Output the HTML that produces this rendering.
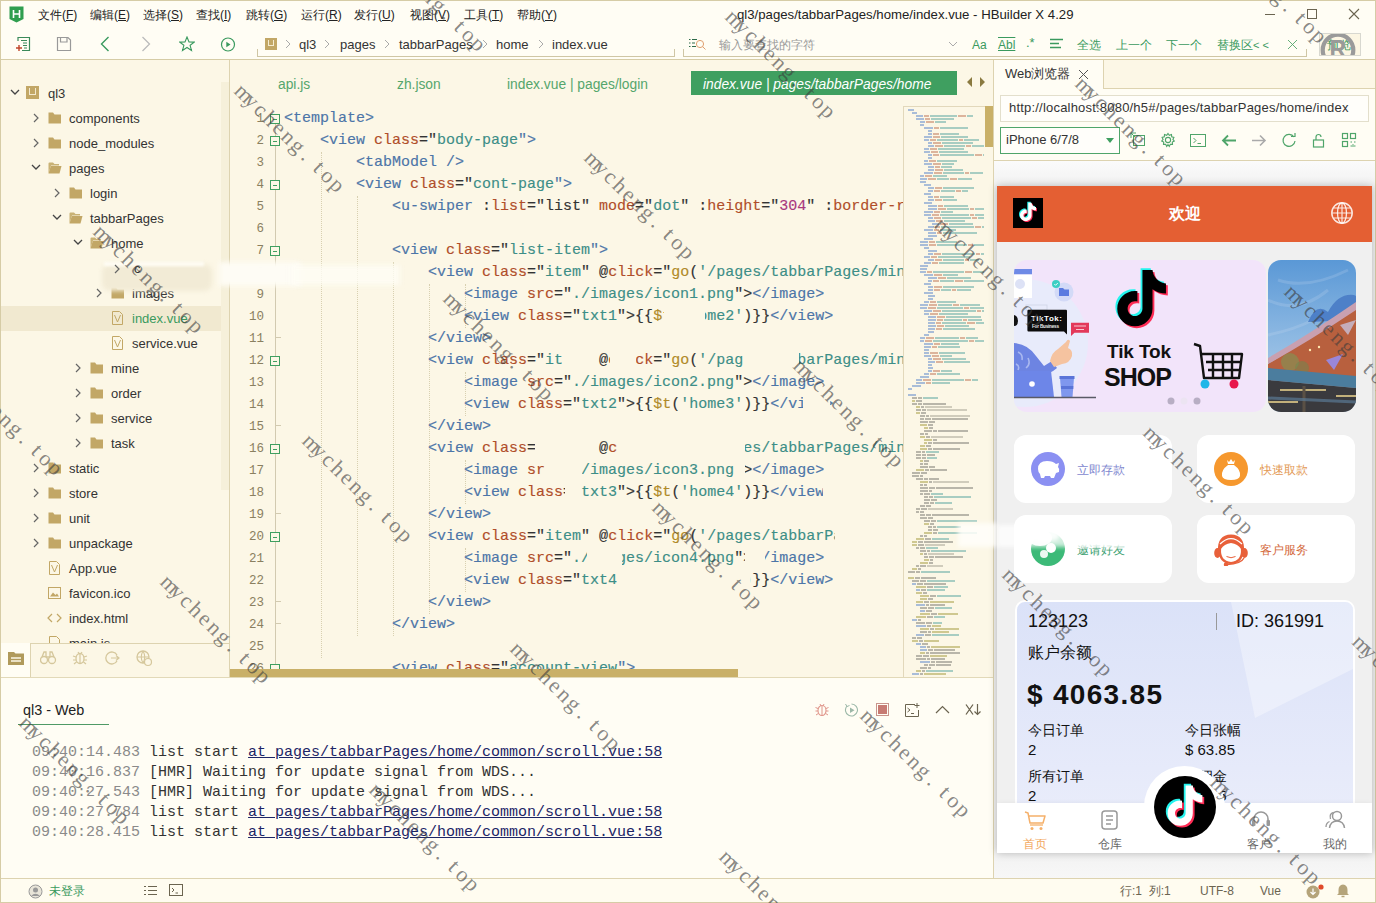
<!DOCTYPE html>
<html><head><meta charset="utf-8">
<style>
*{margin:0;padding:0;box-sizing:border-box}
html,body{width:1376px;height:903px;overflow:hidden;background:#fffdf4;font-family:"Liberation Sans",sans-serif;color:#333}
.a{position:absolute}
.t{position:absolute;white-space:pre;line-height:1}
#frame{position:absolute;left:0;top:0;width:1376px;height:903px;border-left:1px solid #d6cca6;border-top:1px solid #d6cca6}
/* menu */
.menu{font-size:12px;color:#222;top:9px}
/* sidebar */
#side{left:1px;top:60px;width:228px;height:617px;background:#fcf7e6}
.tr{position:absolute;font-size:13px;color:#333;line-height:20px;white-space:pre}
.chev{position:absolute;width:7px;height:7px;border-right:1.3px solid #555;border-bottom:1.3px solid #555}
.chr{transform:rotate(-45deg)}
.chd{transform:rotate(45deg)}
.fold{position:absolute;width:11px;height:9px;background:#c7ad6b;border-radius:1px}
.fold:before{content:"";position:absolute;left:0;top:-2px;width:5px;height:3px;background:#c7ad6b;border-radius:1px 1px 0 0}
/* editor */
#ed{left:230px;top:60px;width:763px;height:617px;background:#fcf7e6}
.code{position:absolute;left:285px;font-family:"Liberation Mono",monospace;font-size:15px;line-height:22px;white-space:pre;color:#333;-webkit-text-stroke:.15px currentColor}
.ln{position:absolute;left:236px;width:28px;text-align:right;font-family:"Liberation Mono",monospace;font-size:12.5px;color:#8a8060;line-height:22px}
.tg{color:#4c75a8}.at{color:#b04e2a}.st{color:#3d8e87}.nm{color:#a8387e}.fn{color:#b08a28}
/* watermark */
.wm{position:absolute;font-family:"Liberation Serif",serif;font-size:22px;color:rgba(60,60,60,.62);white-space:pre;transform-origin:0 0;transform:rotate(44.5deg);line-height:20px;display:flex}.wm i{font-style:normal;display:block;width:12.9px;text-align:center}
</style></head><body>
<div id="frame"></div>


<!-- MENU BAR -->
<svg class="a" style="left:9px;top:6px" width="15" height="17" viewBox="0 0 15 17"><path d="M0.5 0.5 H14.5 V13 L7.5 16.5 L0.5 13 Z" fill="#2f9e4f"/><path d="M4.5 4 V12 M10.5 4 V12 M4.5 8 H10.5" stroke="#fff" stroke-width="1.6" fill="none"/></svg>
<div class="t menu" style="left:38px">文件(<u>F</u>)</div>
<div class="t menu" style="left:90px">编辑(<u>E</u>)</div>
<div class="t menu" style="left:143px">选择(<u>S</u>)</div>
<div class="t menu" style="left:196px">查找(<u>I</u>)</div>
<div class="t menu" style="left:246px">跳转(<u>G</u>)</div>
<div class="t menu" style="left:301px">运行(<u>R</u>)</div>
<div class="t menu" style="left:354px">发行(<u>U</u>)</div>
<div class="t menu" style="left:410px">视图(<u>V</u>)</div>
<div class="t menu" style="left:464px">工具(<u>T</u>)</div>
<div class="t menu" style="left:517px">帮助(<u>Y</u>)</div>
<div class="t" style="left:737px;top:8px;font-size:13.2px;color:#222">ql3/pages/tabbarPages/home/index.vue - HBuilder X 4.29</div>
<div class="a" style="left:1265px;top:14px;width:10px;height:1px;background:#6b6450"></div>
<div class="a" style="left:1307px;top:9px;width:10px;height:10px;border:1px solid #6b6450"></div>
<svg class="a" style="left:1348px;top:8px" width="12" height="12"><path d="M1 1 L11 11 M11 1 L1 11" stroke="#6b6450" stroke-width="1.1"/></svg>
<div class="a" style="left:1375px;top:0;width:1px;height:903px;background:#d6cca6"></div>

<!-- TOOLBAR -->
<svg class="a" style="left:15px;top:36px" width="16" height="16" viewBox="0 0 16 16"><path d="M3 5 V1.5 H14.5 V14.5 H7" stroke="#3a8a5a" stroke-width="1.2" fill="none"/><path d="M6 4.5 H12 M8 7 H12 M8 9.5 H12 M9 12 H12" stroke="#3a8a5a" stroke-width="1.2"/><path d="M1 12 H7 M4 9 V15" stroke="#c0442a" stroke-width="1.4"/></svg>
<svg class="a" style="left:56px;top:36px" width="16" height="16" viewBox="0 0 16 16"><path d="M1.5 1.5 H12 L14.5 4 V14.5 H1.5 Z" stroke="#999" stroke-width="1.2" fill="none"/><path d="M4.5 1.5 V6 H11 V1.5" stroke="#999" stroke-width="1.2" fill="none"/></svg>
<svg class="a" style="left:100px;top:36px" width="10" height="16"><path d="M8.5 1 L1.5 8 L8.5 15" stroke="#3a9a5e" stroke-width="1.4" fill="none"/></svg>
<svg class="a" style="left:141px;top:36px" width="10" height="16"><path d="M1.5 1 L8.5 8 L1.5 15" stroke="#bbb" stroke-width="1.3" fill="none"/></svg>
<svg class="a" style="left:179px;top:36px" width="16" height="16" viewBox="0 0 16 16"><path d="M8 1 L10 6 L15.2 6.1 L11.1 9.3 L12.5 14.5 L8 11.5 L3.5 14.5 L4.9 9.3 L0.8 6.1 L6 6 Z" stroke="#3a9a5e" stroke-width="1.1" fill="none"/></svg>
<svg class="a" style="left:220px;top:37px" width="16" height="16" viewBox="0 0 16 16"><circle cx="8" cy="7.5" r="6.5" stroke="#3a9a5e" stroke-width="1.2" fill="none"/><path d="M6.3 4.8 V10.2 L10.5 7.5 Z" fill="#3a9a5e"/></svg>
<div class="a" style="left:257px;top:49px;width:418px;height:8px;border-left:1px solid #cfc6a4;border-bottom:1px solid #cfc6a4;border-right:1px solid #cfc6a4"></div>
<div class="a" style="left:683px;top:49px;width:624px;height:8px;border-left:1px solid #cfc6a4;border-bottom:1px solid #cfc6a4;border-right:1px solid #cfc6a4"></div>
<div class="a" style="left:265px;top:38px;width:12px;height:12px;background:#c2a766"><div class="a" style="left:3px;top:2px;width:6px;height:6px;border:1.3px solid #f5ecd0;border-top:none"></div></div>
<svg class="a" style="left:284px;top:39px" width="8" height="10"><path d="M2 1 L6 5 L2 9" stroke="#aaa" fill="none"/></svg>
<div class="t" style="left:299px;top:38px;font-size:13px;color:#333">ql3</div>
<svg class="a" style="left:323px;top:39px" width="8" height="10"><path d="M2 1 L6 5 L2 9" stroke="#aaa" fill="none"/></svg>
<div class="t" style="left:340px;top:38px;font-size:13px;color:#333">pages</div>
<svg class="a" style="left:383px;top:39px" width="8" height="10"><path d="M2 1 L6 5 L2 9" stroke="#aaa" fill="none"/></svg>
<div class="t" style="left:399px;top:38px;font-size:13px;color:#333">tabbarPages</div>
<svg class="a" style="left:481px;top:39px" width="8" height="10"><path d="M2 1 L6 5 L2 9" stroke="#aaa" fill="none"/></svg>
<div class="t" style="left:496px;top:38px;font-size:13px;color:#333">home</div>
<svg class="a" style="left:537px;top:39px" width="8" height="10"><path d="M2 1 L6 5 L2 9" stroke="#aaa" fill="none"/></svg>
<div class="t" style="left:552px;top:38px;font-size:13px;color:#333">index.vue</div>
<svg class="a" style="left:688px;top:38px" width="20" height="13"><path d="M1 1.5 H2.5 M4 1.5 H9 M1 5 H2.5 M4 5 H7 M1 8.5 H2.5 M4 8.5 H8" stroke="#2e6b4a" stroke-width="1.2"/><circle cx="12" cy="6" r="3.6" stroke="#e0a070" stroke-width="1" fill="none"/><path d="M14.6 8.6 L17.5 11.5" stroke="#e0a070" stroke-width="1"/></svg>
<div class="t" style="left:719px;top:39px;font-size:12px;color:#999">输入要查找的字符</div>
<svg class="a" style="left:948px;top:40px" width="10" height="8"><path d="M1 2 L5 6 L9 2" stroke="#aaa" fill="none"/></svg>
<div class="t" style="left:972px;top:39px;font-size:12px;color:#3a9a5e">Aa</div>
<div class="t" style="left:998px;top:39px;font-size:12px;color:#3a9a5e;text-decoration:overline underline">Abl</div>
<div class="t" style="left:1026px;top:36px;font-size:13px;color:#3a9a5e">.*</div>
<svg class="a" style="left:1050px;top:38px" width="14" height="12"><path d="M0 1.5 H13 M0 5.5 H9 M0 9.5 H11" stroke="#3a9a5e" stroke-width="1.3"/></svg>
<div class="t" style="left:1077px;top:39px;font-size:12px;color:#3a9a5e">全选</div>
<div class="t" style="left:1116px;top:39px;font-size:12px;color:#3a9a5e">上一个</div>
<div class="t" style="left:1166px;top:39px;font-size:12px;color:#3a9a5e">下一个</div>
<div class="t" style="left:1217px;top:39px;font-size:12px;color:#3a9a5e">替换区<span style="font-size:11px">&lt; &lt;</span></div>
<svg class="a" style="left:1287px;top:39px" width="12" height="12"><path d="M1 1 L10 10 M10 1 L1 10" stroke="#55a66c" stroke-width=".9"/></svg>
<div class="a" style="left:1319px;top:33px;width:42px;height:23px;background:#fcf6e3;border:1px solid #d8d8d0;overflow:hidden">
<div class="t" style="left:7px;top:5px;font-size:12px;color:#3a9a5e">预览</div>
<svg class="a" style="left:0px;top:-1px" width="40" height="40"><circle cx="18" cy="17" r="15.3" stroke="#9a9a9a" stroke-width="4.2" fill="none"/><text x="9.5" y="24" font-family="Liberation Sans" font-weight="bold" font-size="23" fill="#9a9a9a">R</text></svg>
</div>
<div class="a" style="left:1,px;top:59px;width:1375px;height:1px;background:#d6cca6"></div>
<div class="a" style="left:1px;top:59px;width:1374px;height:1px;background:#d6cca6"></div>

<!-- SIDEBAR -->
<div class="a" id="side"></div>
<div class="a" style="left:221px;top:82px;width:8px;height:408px;background:#f6f0da"></div>
<div class="a" style="left:1px;top:306px;width:220px;height:25px;background:#f1e9d0"></div>
<svg class="a" style="left:10px;top:89px" width="10" height="7"><path d="M1 1 L5 5 L9 1" stroke="#444" stroke-width="1.3" fill="none"/></svg>
<div class="a" style="left:26px;top:86px;width:13px;height:13px;background:#c2a766"><div class="a" style="left:3px;top:2px;width:7px;height:7px;border:1.4px solid #f3ead0;border-top:none"></div></div>
<div class="tr" style="left:48px;top:84px;color:#333">ql3</div>
<svg class="a" style="left:33px;top:113px" width="7" height="10"><path d="M1 1 L5 5 L1 9" stroke="#666" stroke-width="1.2" fill="none"/></svg>
<svg class="a" style="left:48px;top:112px" width="14" height="12"><path d="M0.5 0.5 H5 L6.5 2.5 H13 V11.5 H0.5 Z" fill="#c2a766"/></svg>
<div class="tr" style="left:69px;top:109px;color:#333">components</div>
<svg class="a" style="left:33px;top:138px" width="7" height="10"><path d="M1 1 L5 5 L1 9" stroke="#666" stroke-width="1.2" fill="none"/></svg>
<svg class="a" style="left:48px;top:137px" width="14" height="12"><path d="M0.5 0.5 H5 L6.5 2.5 H13 V11.5 H0.5 Z" fill="#c2a766"/></svg>
<div class="tr" style="left:69px;top:134px;color:#333">node_modules</div>
<svg class="a" style="left:31px;top:164px" width="10" height="7"><path d="M1 1 L5 5 L9 1" stroke="#444" stroke-width="1.3" fill="none"/></svg>
<svg class="a" style="left:48px;top:162px" width="14" height="12"><path d="M0.5 1.5 Q0.5 0.5 1.5 0.5 H5 L6.5 2 H11 V3.5 H3 L0.5 11.5 Z" fill="#c9b275"/><path d="M2.8 4 H13.5 L11.5 11.5 H0.5 Z" fill="#c2a766"/></svg>
<div class="tr" style="left:69px;top:159px;color:#333">pages</div>
<svg class="a" style="left:54px;top:188px" width="7" height="10"><path d="M1 1 L5 5 L1 9" stroke="#666" stroke-width="1.2" fill="none"/></svg>
<svg class="a" style="left:69px;top:187px" width="14" height="12"><path d="M0.5 0.5 H5 L6.5 2.5 H13 V11.5 H0.5 Z" fill="#c2a766"/></svg>
<div class="tr" style="left:90px;top:184px;color:#333">login</div>
<svg class="a" style="left:52px;top:214px" width="10" height="7"><path d="M1 1 L5 5 L9 1" stroke="#444" stroke-width="1.3" fill="none"/></svg>
<svg class="a" style="left:69px;top:212px" width="14" height="12"><path d="M0.5 1.5 Q0.5 0.5 1.5 0.5 H5 L6.5 2 H11 V3.5 H3 L0.5 11.5 Z" fill="#c9b275"/><path d="M2.8 4 H13.5 L11.5 11.5 H0.5 Z" fill="#c2a766"/></svg>
<div class="tr" style="left:90px;top:209px;color:#333">tabbarPages</div>
<svg class="a" style="left:73px;top:239px" width="10" height="7"><path d="M1 1 L5 5 L9 1" stroke="#444" stroke-width="1.3" fill="none"/></svg>
<svg class="a" style="left:90px;top:237px" width="14" height="12"><path d="M0.5 1.5 Q0.5 0.5 1.5 0.5 H5 L6.5 2 H11 V3.5 H3 L0.5 11.5 Z" fill="#c9b275"/><path d="M2.8 4 H13.5 L11.5 11.5 H0.5 Z" fill="#c2a766"/></svg>
<div class="tr" style="left:111px;top:234px;color:#333">home</div>



<svg class="a" style="left:96px;top:288px" width="7" height="10"><path d="M1 1 L5 5 L1 9" stroke="#666" stroke-width="1.2" fill="none"/></svg>
<svg class="a" style="left:111px;top:287px" width="14" height="12"><path d="M0.5 0.5 H5 L6.5 2.5 H13 V11.5 H0.5 Z" fill="#c2a766"/></svg>
<div class="tr" style="left:132px;top:284px;color:#333">images</div>
<svg class="a" style="left:112px;top:311px" width="11" height="14"><path d="M0.5 0.5 H7.5 L10.5 3.5 V13.5 H0.5 Z" stroke="#c2a766" fill="none"/><path d="M2.5 4 L5.5 11 L8.5 4" stroke="#c2a766" fill="none"/></svg>
<div class="tr" style="left:132px;top:309px;color:#3a9a5e">index.vue</div>
<svg class="a" style="left:112px;top:336px" width="11" height="14"><path d="M0.5 0.5 H7.5 L10.5 3.5 V13.5 H0.5 Z" stroke="#c2a766" fill="none"/><path d="M2.5 4 L5.5 11 L8.5 4" stroke="#c2a766" fill="none"/></svg>
<div class="tr" style="left:132px;top:334px;color:#333">service.vue</div>
<svg class="a" style="left:75px;top:363px" width="7" height="10"><path d="M1 1 L5 5 L1 9" stroke="#666" stroke-width="1.2" fill="none"/></svg>
<svg class="a" style="left:90px;top:362px" width="14" height="12"><path d="M0.5 0.5 H5 L6.5 2.5 H13 V11.5 H0.5 Z" fill="#c2a766"/></svg>
<div class="tr" style="left:111px;top:359px;color:#333">mine</div>
<svg class="a" style="left:75px;top:388px" width="7" height="10"><path d="M1 1 L5 5 L1 9" stroke="#666" stroke-width="1.2" fill="none"/></svg>
<svg class="a" style="left:90px;top:387px" width="14" height="12"><path d="M0.5 0.5 H5 L6.5 2.5 H13 V11.5 H0.5 Z" fill="#c2a766"/></svg>
<div class="tr" style="left:111px;top:384px;color:#333">order</div>
<svg class="a" style="left:75px;top:413px" width="7" height="10"><path d="M1 1 L5 5 L1 9" stroke="#666" stroke-width="1.2" fill="none"/></svg>
<svg class="a" style="left:90px;top:412px" width="14" height="12"><path d="M0.5 0.5 H5 L6.5 2.5 H13 V11.5 H0.5 Z" fill="#c2a766"/></svg>
<div class="tr" style="left:111px;top:409px;color:#333">service</div>
<svg class="a" style="left:75px;top:438px" width="7" height="10"><path d="M1 1 L5 5 L1 9" stroke="#666" stroke-width="1.2" fill="none"/></svg>
<svg class="a" style="left:90px;top:437px" width="14" height="12"><path d="M0.5 0.5 H5 L6.5 2.5 H13 V11.5 H0.5 Z" fill="#c2a766"/></svg>
<div class="tr" style="left:111px;top:434px;color:#333">task</div>
<svg class="a" style="left:33px;top:463px" width="7" height="10"><path d="M1 1 L5 5 L1 9" stroke="#666" stroke-width="1.2" fill="none"/></svg>
<svg class="a" style="left:48px;top:462px" width="14" height="12"><path d="M0.5 0.5 H5 L6.5 2.5 H13 V11.5 H0.5 Z" fill="#c2a766"/></svg>
<div class="tr" style="left:69px;top:459px;color:#333">static</div>
<svg class="a" style="left:33px;top:488px" width="7" height="10"><path d="M1 1 L5 5 L1 9" stroke="#666" stroke-width="1.2" fill="none"/></svg>
<svg class="a" style="left:48px;top:487px" width="14" height="12"><path d="M0.5 0.5 H5 L6.5 2.5 H13 V11.5 H0.5 Z" fill="#c2a766"/></svg>
<div class="tr" style="left:69px;top:484px;color:#333">store</div>
<svg class="a" style="left:33px;top:513px" width="7" height="10"><path d="M1 1 L5 5 L1 9" stroke="#666" stroke-width="1.2" fill="none"/></svg>
<svg class="a" style="left:48px;top:512px" width="14" height="12"><path d="M0.5 0.5 H5 L6.5 2.5 H13 V11.5 H0.5 Z" fill="#c2a766"/></svg>
<div class="tr" style="left:69px;top:509px;color:#333">unit</div>
<svg class="a" style="left:33px;top:538px" width="7" height="10"><path d="M1 1 L5 5 L1 9" stroke="#666" stroke-width="1.2" fill="none"/></svg>
<svg class="a" style="left:48px;top:537px" width="14" height="12"><path d="M0.5 0.5 H5 L6.5 2.5 H13 V11.5 H0.5 Z" fill="#c2a766"/></svg>
<div class="tr" style="left:69px;top:534px;color:#333">unpackage</div>
<svg class="a" style="left:49px;top:561px" width="11" height="14"><path d="M0.5 0.5 H7.5 L10.5 3.5 V13.5 H0.5 Z" stroke="#c2a766" fill="none"/><path d="M2.5 4 L5.5 11 L8.5 4" stroke="#c2a766" fill="none"/></svg>
<div class="tr" style="left:69px;top:559px;color:#333">App.vue</div>
<svg class="a" style="left:48px;top:587px" width="13" height="12"><rect x="0.5" y="0.5" width="12" height="11" stroke="#c2a766" fill="none"/><path d="M2 9.5 L5 5.5 L7.5 8 L9 6.5 L11 9.5 Z" fill="#c2a766"/></svg>
<div class="tr" style="left:69px;top:584px;color:#333">favicon.ico</div>
<svg class="a" style="left:47px;top:613px" width="15" height="10"><path d="M5 1 L1 5 L5 9 M10 1 L14 5 L10 9" stroke="#c2a766" stroke-width="1.2" fill="none"/></svg>
<div class="tr" style="left:69px;top:609px;color:#333">index.html</div>
<svg class="a" style="left:49px;top:636px" width="11" height="14"><path d="M0.5 0.5 H7.5 L10.5 3.5 V13.5 H0.5 Z" stroke="#c2a766" fill="none"/></svg>
<div class="tr" style="left:69px;top:634px;color:#333">main.js</div>
<div class="a" style="left:1px;top:643px;width:228px;height:34px;background:#fcf7e6;border-top:1px solid #ddd3b0"></div>
<div class="a" style="left:1px;top:643px;width:30px;height:34px;background:#fffdf4;border-right:1px solid #ddd3b0"></div>
<svg class="a" style="left:8px;top:651px" width="16" height="14"><path d="M0 1 H6 L7.5 2.5 H16 V14 H0 Z" fill="#b09a5c"/><path d="M3 7 H13 M3 10 H13" stroke="#fcf7e6" stroke-width="1.3"/></svg>
<svg class="a" style="left:40px;top:650px" width="17" height="17"><circle cx="4" cy="10" r="3.5" stroke="#d5c79c" stroke-width="1.3" fill="none"/><circle cx="12" cy="10" r="3.5" stroke="#d5c79c" stroke-width="1.3" fill="none"/><path d="M2 7 L4 2 H6 V7 M14 7 L12 2 H10 V7 M6 7 H10" stroke="#d5c79c" stroke-width="1.3" fill="none"/></svg>
<svg class="a" style="left:72px;top:650px" width="17" height="17"><ellipse cx="8" cy="8.5" rx="4" ry="5" stroke="#d5c79c" stroke-width="1.3" fill="none"/><path d="M8 4 V13 M1 6 L4 7 M15 6 L12 7 M1 10 H4 M15 10 H12 M2 14 L4.5 12 M14 14 L11.5 12 M6 2 L7 3.5 M10 2 L9 3.5" stroke="#d5c79c" stroke-width="1.2" fill="none"/></svg>
<svg class="a" style="left:104px;top:650px" width="17" height="17"><path d="M13 5 A6 6 0 1 0 13 11" stroke="#d5c79c" stroke-width="1.3" fill="none"/><path d="M7 8 H15 M12 5.5 L15 8 L12 10.5" stroke="#d5c79c" stroke-width="1.2" fill="none"/></svg>
<svg class="a" style="left:136px;top:650px" width="17" height="17"><circle cx="7" cy="7" r="6" stroke="#d5c79c" stroke-width="1.3" fill="none"/><path d="M1 7 H13 M7 1 Q3.5 7 7 13 M7 1 Q10.5 7 7 13" stroke="#d5c79c" stroke-width="1.1" fill="none"/><circle cx="12" cy="12" r="3.5" fill="#fcf7e6" stroke="#d5c79c" stroke-width="1.2"/></svg>
<div class="a" style="left:229px;top:60px;width:1px;height:617px;background:#ddd3b0"></div>
<div class="a" style="left:1px;top:677px;width:1374px;height:1px;background:#e2d9b8"></div>
<!-- EDITOR -->
<div class="a" id="ed"></div>
<div class="t" style="left:278px;top:78px;font-size:13.8px;color:#55a66c">api.js</div>
<div class="t" style="left:397px;top:78px;font-size:13.8px;color:#55a66c">zh.json</div>
<div class="t" style="left:507px;top:78px;font-size:13.8px;color:#55a66c">index.vue | pages/login</div>
<div class="a" style="left:691px;top:71px;width:266px;height:24px;background:#3f9f60"></div>
<div class="t" style="left:703px;top:78px;font-size:13.8px;color:#fff;font-style:italic">index.vue | pages/tabbarPages/home</div>
<svg class="a" style="left:966px;top:77px" width="20" height="10"><path d="M6 0 V10 L1 5 Z M14 0 V10 L19 5 Z" fill="#8a7a40"/></svg>
<div class="a" style="left:230px;top:106px;width:673px;height:563px;overflow:hidden">
<div class="a" style="left:91px;top:46px;width:1px;height:506px;border-left:1px dotted #d8d0b0"></div>
<div class="a" style="left:127px;top:90px;width:1px;height:440px;border-left:1px dotted #d8d0b0"></div>
<div class="a" style="left:163px;top:156px;width:1px;height:374px;border-left:1px dotted #d8d0b0"></div>
<div class="a" style="left:199px;top:178px;width:1px;height:330px;border-left:1px dotted #d8d0b0"></div>
<div class="a" style="left:235px;top:178px;width:1px;height:44px;border-left:1px dotted #d8d0b0"></div>
<div class="a" style="left:235px;top:266px;width:1px;height:44px;border-left:1px dotted #d8d0b0"></div>
<div class="a" style="left:235px;top:354px;width:1px;height:44px;border-left:1px dotted #d8d0b0"></div>
<div class="a" style="left:235px;top:442px;width:1px;height:44px;border-left:1px dotted #d8d0b0"></div>
<div class="a" style="left:45px;top:13px;width:1px;height:550px;background:#d2cab0"></div>
<div class="ln" style="left:6px;top:2px">1</div>
<div class="a" style="left:40px;top:8px;width:10px;height:10px;border:1px solid #3f9f60;background:#fcf7e6"><div class="a" style="left:2px;top:3.5px;width:4px;height:1px;background:#3f9f60"></div></div>
<div class="code" style="left:54px;top:2px"><span class="tg">&lt;template&gt;</span></div>
<div class="ln" style="left:6px;top:24px">2</div>
<div class="a" style="left:40px;top:30px;width:10px;height:10px;border:1px solid #3f9f60;background:#fcf7e6"><div class="a" style="left:2px;top:3.5px;width:4px;height:1px;background:#3f9f60"></div></div>
<div class="code" style="left:54px;top:24px">    <span class="tg">&lt;view</span> <span class="at">class</span>=&quot;<span class="st">body-page</span><span class="tg">&quot;&gt;</span></div>
<div class="ln" style="left:6px;top:46px">3</div>
<div class="code" style="left:54px;top:46px">        <span class="tg">&lt;tabModel /&gt;</span></div>
<div class="ln" style="left:6px;top:68px">4</div>
<div class="a" style="left:40px;top:74px;width:10px;height:10px;border:1px solid #3f9f60;background:#fcf7e6"><div class="a" style="left:2px;top:3.5px;width:4px;height:1px;background:#3f9f60"></div></div>
<div class="code" style="left:54px;top:68px">        <span class="tg">&lt;view</span> <span class="at">class</span>=&quot;<span class="st">cont-page</span><span class="tg">&quot;&gt;</span></div>
<div class="ln" style="left:6px;top:90px">5</div>
<div class="code" style="left:54px;top:90px">            <span class="tg">&lt;u-swiper</span> :<span class="at">list</span>=&quot;list&quot; <span class="at">mode</span>=&quot;<span class="st">dot</span>&quot; :<span class="at">height</span>=&quot;<span class="nm">304</span>&quot; :<span class="at">border-r</span></div>
<div class="ln" style="left:6px;top:112px">6</div>
<div class="code" style="left:54px;top:112px"></div>
<div class="ln" style="left:6px;top:134px">7</div>
<div class="a" style="left:40px;top:140px;width:10px;height:10px;border:1px solid #3f9f60;background:#fcf7e6"><div class="a" style="left:2px;top:3.5px;width:4px;height:1px;background:#3f9f60"></div></div>
<div class="code" style="left:54px;top:134px">            <span class="tg">&lt;view</span> <span class="at">class</span>=&quot;<span class="st">list-item</span><span class="tg">&quot;&gt;</span></div>
<div class="ln" style="left:6px;top:156px">8</div>
<div class="a" style="left:40px;top:162px;width:10px;height:10px;border:1px solid #3f9f60;background:#fcf7e6"><div class="a" style="left:2px;top:3.5px;width:4px;height:1px;background:#3f9f60"></div></div>
<div class="code" style="left:54px;top:156px">                <span class="tg">&lt;view</span> <span class="at">class</span>=&quot;<span class="st">item</span>&quot; @<span class="at">click</span>=&quot;<span class="fn">go</span>(<span class="st">&#x27;/pages/tabbarPages/min</span></div>
<div class="ln" style="left:6px;top:178px">9</div>
<div class="code" style="left:54px;top:178px">                    <span class="tg">&lt;image</span> <span class="at">src</span>=&quot;<span class="st">./images/icon1.png</span>&quot;&gt;<span class="tg">&lt;/image&gt;</span></div>
<div class="ln" style="left:6px;top:200px">10</div>
<div class="code" style="left:54px;top:200px">                    <span class="tg">&lt;view</span> <span class="at">class</span>=&quot;<span class="st">txt1</span>&quot;&gt;{{<span class="fn">$t</span>(<span class="st">&#x27;home2&#x27;</span>)}}<span class="tg">&lt;/view&gt;</span></div>
<div class="ln" style="left:6px;top:222px">11</div>
<div class="a" style="left:46px;top:231px;width:5px;height:1px;background:#d2cab0"></div>
<div class="code" style="left:54px;top:222px">                <span class="tg">&lt;/view&gt;</span></div>
<div class="ln" style="left:6px;top:244px">12</div>
<div class="a" style="left:40px;top:250px;width:10px;height:10px;border:1px solid #3f9f60;background:#fcf7e6"><div class="a" style="left:2px;top:3.5px;width:4px;height:1px;background:#3f9f60"></div></div>
<div class="code" style="left:54px;top:244px">                <span class="tg">&lt;view</span> <span class="at">class</span>=&quot;<span class="st">item</span>&quot; @<span class="at">click</span>=&quot;<span class="fn">go</span>(<span class="st">&#x27;/pages/tabbarPages/min</span></div>
<div class="ln" style="left:6px;top:266px">13</div>
<div class="code" style="left:54px;top:266px">                    <span class="tg">&lt;image</span> <span class="at">src</span>=&quot;<span class="st">./images/icon2.png</span>&quot;&gt;<span class="tg">&lt;/image&gt;</span></div>
<div class="ln" style="left:6px;top:288px">14</div>
<div class="code" style="left:54px;top:288px">                    <span class="tg">&lt;view</span> <span class="at">class</span>=&quot;<span class="st">txt2</span>&quot;&gt;{{<span class="fn">$t</span>(<span class="st">&#x27;home3&#x27;</span>)}}<span class="tg">&lt;/view&gt;</span></div>
<div class="ln" style="left:6px;top:310px">15</div>
<div class="a" style="left:46px;top:319px;width:5px;height:1px;background:#d2cab0"></div>
<div class="code" style="left:54px;top:310px">                <span class="tg">&lt;/view&gt;</span></div>
<div class="ln" style="left:6px;top:332px">16</div>
<div class="a" style="left:40px;top:338px;width:10px;height:10px;border:1px solid #3f9f60;background:#fcf7e6"><div class="a" style="left:2px;top:3.5px;width:4px;height:1px;background:#3f9f60"></div></div>
<div class="code" style="left:54px;top:332px">                <span class="tg">&lt;view</span> <span class="at">class</span>=&quot;<span class="st">item</span>&quot; @<span class="at">click</span>=&quot;<span class="fn">go</span>(<span class="st">&#x27;/pages/tabbarPages/min</span></div>
<div class="ln" style="left:6px;top:354px">17</div>
<div class="code" style="left:54px;top:354px">                    <span class="tg">&lt;image</span> <span class="at">src</span>=&quot;<span class="st">./images/icon3.png</span>&quot;&gt;<span class="tg">&lt;/image&gt;</span></div>
<div class="ln" style="left:6px;top:376px">18</div>
<div class="code" style="left:54px;top:376px">                    <span class="tg">&lt;view</span> <span class="at">class</span>=&quot;<span class="st">txt3</span>&quot;&gt;{{<span class="fn">$t</span>(<span class="st">&#x27;home4&#x27;</span>)}}<span class="tg">&lt;/view&gt;</span></div>
<div class="ln" style="left:6px;top:398px">19</div>
<div class="a" style="left:46px;top:407px;width:5px;height:1px;background:#d2cab0"></div>
<div class="code" style="left:54px;top:398px">                <span class="tg">&lt;/view&gt;</span></div>
<div class="ln" style="left:6px;top:420px">20</div>
<div class="a" style="left:40px;top:426px;width:10px;height:10px;border:1px solid #3f9f60;background:#fcf7e6"><div class="a" style="left:2px;top:3.5px;width:4px;height:1px;background:#3f9f60"></div></div>
<div class="code" style="left:54px;top:420px">                <span class="tg">&lt;view</span> <span class="at">class</span>=&quot;<span class="st">item</span>&quot; @<span class="at">click</span>=&quot;<span class="fn">go</span>(<span class="st">&#x27;/pages/tabbarPages/min</span></div>
<div class="ln" style="left:6px;top:442px">21</div>
<div class="code" style="left:54px;top:442px">                    <span class="tg">&lt;image</span> <span class="at">src</span>=&quot;<span class="st">./images/icon4.png</span>&quot;&gt;<span class="tg">&lt;/image&gt;</span></div>
<div class="ln" style="left:6px;top:464px">22</div>
<div class="code" style="left:54px;top:464px">                    <span class="tg">&lt;view</span> <span class="at">class</span>=&quot;<span class="st">txt4</span>&quot;&gt;{{<span class="fn">$t</span>(<span class="st">&#x27;home5&#x27;</span>)}}<span class="tg">&lt;/view&gt;</span></div>
<div class="ln" style="left:6px;top:486px">23</div>
<div class="a" style="left:46px;top:495px;width:5px;height:1px;background:#d2cab0"></div>
<div class="code" style="left:54px;top:486px">                <span class="tg">&lt;/view&gt;</span></div>
<div class="ln" style="left:6px;top:508px">24</div>
<div class="a" style="left:46px;top:517px;width:5px;height:1px;background:#d2cab0"></div>
<div class="code" style="left:54px;top:508px">            <span class="tg">&lt;/view&gt;</span></div>
<div class="ln" style="left:6px;top:530px">25</div>
<div class="code" style="left:54px;top:530px"></div>
<div class="ln" style="left:6px;top:552px">26</div>
<div class="a" style="left:40px;top:558px;width:10px;height:10px;border:1px solid #3f9f60;background:#fcf7e6"><div class="a" style="left:2px;top:3.5px;width:4px;height:1px;background:#3f9f60"></div></div>
<div class="code" style="left:54px;top:552px">            <span class="tg">&lt;view</span> <span class="at">class</span>=&quot;<span class="st">account-view</span><span class="tg">&quot;&gt;</span></div>
<div class="a" style="left:434px;top:203px;width:41px;height:17px;background:#fcf7e6"></div>
<div class="a" style="left:332px;top:247px;width:36px;height:17px;background:#fcf7e6"></div>
<div class="a" style="left:380px;top:247px;width:26px;height:17px;background:#fcf7e6"></div>
<div class="a" style="left:513px;top:247px;width:56px;height:17px;background:#fcf7e6"></div>
<div class="a" style="left:573px;top:291px;width:27px;height:17px;background:#fcf7e6"></div>
<div class="a" style="left:305px;top:335px;width:63px;height:17px;background:#fcf7e6"></div>
<div class="a" style="left:387px;top:335px;width:128px;height:17px;background:#fcf7e6"></div>
<div class="a" style="left:315px;top:357px;width:37px;height:17px;background:#fcf7e6"></div>
<div class="a" style="left:505px;top:357px;width:10px;height:17px;background:#fcf7e6"></div>
<div class="a" style="left:335px;top:379px;width:15px;height:17px;background:#fcf7e6"></div>
<div class="a" style="left:593px;top:379px;width:80px;height:17px;background:#fcf7e6"></div>
<div class="a" style="left:605px;top:423px;width:68px;height:17px;background:#fcf7e6"></div>
<div class="a" style="left:357px;top:445px;width:35px;height:17px;background:#fcf7e6"></div>
<div class="a" style="left:515px;top:445px;width:20px;height:17px;background:#fcf7e6"></div>
<div class="a" style="left:387px;top:467px;width:133px;height:17px;background:#fcf7e6"></div>
</div>
<div class="a" style="left:230px;top:669px;width:508px;height:8px;background:#c9b068"></div>
<div class="a" style="left:903px;top:106px;width:82px;height:571px;overflow:hidden;border-left:1px solid #e2d8bb">
<div class="a" style="left:0;top:0;width:82px;height:1px;background:#e2d8bb"></div>
<div class="a" style="left:4px;top:3px;width:6px;height:1.5px;background:#a9bdd8"></div>
<div class="a" style="left:8px;top:6px;width:5px;height:1.5px;background:#a9bdd8"></div>
<div class="a" style="left:12px;top:9px;width:7px;height:1.5px;background:#a9bdd8"></div>
<div class="a" style="left:20px;top:9px;width:5px;height:1.5px;background:#dcb49c"></div>
<div class="a" style="left:26px;top:9px;width:27px;height:1.5px;background:#a8cdc2"></div>
<div class="a" style="left:54px;top:9px;width:8px;height:1.5px;background:#dcb49c"></div>
<div class="a" style="left:63px;top:9px;width:6px;height:1.5px;background:#a8cdc2"></div>
<div class="a" style="left:12px;top:12px;width:8px;height:1.5px;background:#a9bdd8"></div>
<div class="a" style="left:21px;top:12px;width:5px;height:1.5px;background:#dcb49c"></div>
<div class="a" style="left:27px;top:12px;width:23px;height:1.5px;background:#a8cdc2"></div>
<div class="a" style="left:16px;top:15px;width:5px;height:1.5px;background:#a9bdd8"></div>
<div class="a" style="left:22px;top:15px;width:8px;height:1.5px;background:#dcb49c"></div>
<div class="a" style="left:31px;top:15px;width:11px;height:1.5px;background:#a8cdc2"></div>
<div class="a" style="left:16px;top:18px;width:4px;height:1.5px;background:#a9bdd8"></div>
<div class="a" style="left:20px;top:21px;width:9px;height:1.5px;background:#a9bdd8"></div>
<div class="a" style="left:30px;top:21px;width:5px;height:1.5px;background:#dcb49c"></div>
<div class="a" style="left:36px;top:21px;width:28px;height:1.5px;background:#a8cdc2"></div>
<div class="a" style="left:24px;top:24px;width:4px;height:1.5px;background:#a9bdd8"></div>
<div class="a" style="left:24px;top:27px;width:4px;height:1.5px;background:#a9bdd8"></div>
<div class="a" style="left:29px;top:27px;width:6px;height:1.5px;background:#dcb49c"></div>
<div class="a" style="left:36px;top:27px;width:19px;height:1.5px;background:#a8cdc2"></div>
<div class="a" style="left:20px;top:30px;width:8px;height:1.5px;background:#a9bdd8"></div>
<div class="a" style="left:29px;top:30px;width:7px;height:1.5px;background:#dcb49c"></div>
<div class="a" style="left:37px;top:30px;width:27px;height:1.5px;background:#a8cdc2"></div>
<div class="a" style="left:20px;top:33px;width:5px;height:1.5px;background:#a9bdd8"></div>
<div class="a" style="left:26px;top:33px;width:6px;height:1.5px;background:#dcb49c"></div>
<div class="a" style="left:33px;top:33px;width:21px;height:1.5px;background:#a8cdc2"></div>
<div class="a" style="left:55px;top:33px;width:4px;height:1.5px;background:#dcb49c"></div>
<div class="a" style="left:60px;top:33px;width:15px;height:1.5px;background:#a8cdc2"></div>
<div class="a" style="left:24px;top:36px;width:4px;height:1.5px;background:#a9bdd8"></div>
<div class="a" style="left:29px;top:36px;width:8px;height:1.5px;background:#dcb49c"></div>
<div class="a" style="left:38px;top:36px;width:31px;height:1.5px;background:#a8cdc2"></div>
<div class="a" style="left:24px;top:39px;width:6px;height:1.5px;background:#a9bdd8"></div>
<div class="a" style="left:31px;top:39px;width:8px;height:1.5px;background:#dcb49c"></div>
<div class="a" style="left:40px;top:39px;width:21px;height:1.5px;background:#a8cdc2"></div>
<div class="a" style="left:62px;top:39px;width:5px;height:1.5px;background:#dcb49c"></div>
<div class="a" style="left:68px;top:39px;width:12px;height:1.5px;background:#a8cdc2"></div>
<div class="a" style="left:20px;top:42px;width:5px;height:1.5px;background:#a9bdd8"></div>
<div class="a" style="left:26px;top:42px;width:7px;height:1.5px;background:#dcb49c"></div>
<div class="a" style="left:34px;top:42px;width:26px;height:1.5px;background:#a8cdc2"></div>
<div class="a" style="left:20px;top:45px;width:6px;height:1.5px;background:#a9bdd8"></div>
<div class="a" style="left:27px;top:45px;width:7px;height:1.5px;background:#dcb49c"></div>
<div class="a" style="left:35px;top:45px;width:29px;height:1.5px;background:#a8cdc2"></div>
<div class="a" style="left:24px;top:48px;width:4px;height:1.5px;background:#a9bdd8"></div>
<div class="a" style="left:29px;top:48px;width:6px;height:1.5px;background:#dcb49c"></div>
<div class="a" style="left:36px;top:48px;width:34px;height:1.5px;background:#a8cdc2"></div>
<div class="a" style="left:71px;top:48px;width:7px;height:1.5px;background:#dcb49c"></div>
<div class="a" style="left:79px;top:48px;width:1px;height:1.5px;background:#a8cdc2"></div>
<div class="a" style="left:24px;top:51px;width:4px;height:1.5px;background:#a9bdd8"></div>
<div class="a" style="left:20px;top:54px;width:4px;height:1.5px;background:#a9bdd8"></div>
<div class="a" style="left:25px;top:54px;width:7px;height:1.5px;background:#dcb49c"></div>
<div class="a" style="left:33px;top:54px;width:20px;height:1.5px;background:#a8cdc2"></div>
<div class="a" style="left:20px;top:57px;width:8px;height:1.5px;background:#a9bdd8"></div>
<div class="a" style="left:29px;top:57px;width:8px;height:1.5px;background:#dcb49c"></div>
<div class="a" style="left:38px;top:57px;width:12px;height:1.5px;background:#a8cdc2"></div>
<div class="a" style="left:24px;top:60px;width:6px;height:1.5px;background:#a9bdd8"></div>
<div class="a" style="left:31px;top:60px;width:5px;height:1.5px;background:#dcb49c"></div>
<div class="a" style="left:37px;top:60px;width:11px;height:1.5px;background:#a8cdc2"></div>
<div class="a" style="left:24px;top:63px;width:6px;height:1.5px;background:#a9bdd8"></div>
<div class="a" style="left:31px;top:63px;width:8px;height:1.5px;background:#dcb49c"></div>
<div class="a" style="left:40px;top:63px;width:19px;height:1.5px;background:#a8cdc2"></div>
<div class="a" style="left:20px;top:66px;width:9px;height:1.5px;background:#a9bdd8"></div>
<div class="a" style="left:30px;top:66px;width:8px;height:1.5px;background:#dcb49c"></div>
<div class="a" style="left:39px;top:66px;width:21px;height:1.5px;background:#a8cdc2"></div>
<div class="a" style="left:61px;top:66px;width:4px;height:1.5px;background:#dcb49c"></div>
<div class="a" style="left:66px;top:66px;width:13px;height:1.5px;background:#a8cdc2"></div>
<div class="a" style="left:16px;top:69px;width:4px;height:1.5px;background:#a9bdd8"></div>
<div class="a" style="left:21px;top:69px;width:7px;height:1.5px;background:#dcb49c"></div>
<div class="a" style="left:29px;top:69px;width:14px;height:1.5px;background:#a8cdc2"></div>
<div class="a" style="left:16px;top:72px;width:7px;height:1.5px;background:#a9bdd8"></div>
<div class="a" style="left:24px;top:72px;width:8px;height:1.5px;background:#dcb49c"></div>
<div class="a" style="left:33px;top:72px;width:12px;height:1.5px;background:#a8cdc2"></div>
<div class="a" style="left:46px;top:72px;width:7px;height:1.5px;background:#dcb49c"></div>
<div class="a" style="left:54px;top:72px;width:14px;height:1.5px;background:#a8cdc2"></div>
<div class="a" style="left:16px;top:75px;width:6px;height:1.5px;background:#a9bdd8"></div>
<div class="a" style="left:20px;top:78px;width:7px;height:1.5px;background:#a9bdd8"></div>
<div class="a" style="left:24px;top:81px;width:6px;height:1.5px;background:#a9bdd8"></div>
<div class="a" style="left:31px;top:81px;width:7px;height:1.5px;background:#dcb49c"></div>
<div class="a" style="left:39px;top:81px;width:31px;height:1.5px;background:#a8cdc2"></div>
<div class="a" style="left:24px;top:84px;width:5px;height:1.5px;background:#a9bdd8"></div>
<div class="a" style="left:30px;top:84px;width:6px;height:1.5px;background:#dcb49c"></div>
<div class="a" style="left:37px;top:84px;width:14px;height:1.5px;background:#a8cdc2"></div>
<div class="a" style="left:52px;top:84px;width:5px;height:1.5px;background:#dcb49c"></div>
<div class="a" style="left:58px;top:84px;width:6px;height:1.5px;background:#a8cdc2"></div>
<div class="a" style="left:20px;top:87px;width:7px;height:1.5px;background:#a9bdd8"></div>
<div class="a" style="left:24px;top:90px;width:5px;height:1.5px;background:#a9bdd8"></div>
<div class="a" style="left:30px;top:90px;width:5px;height:1.5px;background:#dcb49c"></div>
<div class="a" style="left:36px;top:90px;width:14px;height:1.5px;background:#a8cdc2"></div>
<div class="a" style="left:24px;top:93px;width:6px;height:1.5px;background:#a9bdd8"></div>
<div class="a" style="left:31px;top:93px;width:7px;height:1.5px;background:#dcb49c"></div>
<div class="a" style="left:39px;top:93px;width:14px;height:1.5px;background:#a8cdc2"></div>
<div class="a" style="left:20px;top:96px;width:8px;height:1.5px;background:#a9bdd8"></div>
<div class="a" style="left:24px;top:99px;width:9px;height:1.5px;background:#a9bdd8"></div>
<div class="a" style="left:34px;top:99px;width:5px;height:1.5px;background:#dcb49c"></div>
<div class="a" style="left:40px;top:99px;width:24px;height:1.5px;background:#a8cdc2"></div>
<div class="a" style="left:24px;top:102px;width:9px;height:1.5px;background:#a9bdd8"></div>
<div class="a" style="left:34px;top:102px;width:8px;height:1.5px;background:#dcb49c"></div>
<div class="a" style="left:43px;top:102px;width:22px;height:1.5px;background:#a8cdc2"></div>
<div class="a" style="left:66px;top:102px;width:4px;height:1.5px;background:#dcb49c"></div>
<div class="a" style="left:71px;top:102px;width:9px;height:1.5px;background:#a8cdc2"></div>
<div class="a" style="left:20px;top:105px;width:9px;height:1.5px;background:#a9bdd8"></div>
<div class="a" style="left:30px;top:105px;width:6px;height:1.5px;background:#dcb49c"></div>
<div class="a" style="left:37px;top:105px;width:12px;height:1.5px;background:#a8cdc2"></div>
<div class="a" style="left:20px;top:108px;width:7px;height:1.5px;background:#a9bdd8"></div>
<div class="a" style="left:28px;top:108px;width:7px;height:1.5px;background:#dcb49c"></div>
<div class="a" style="left:36px;top:108px;width:29px;height:1.5px;background:#a8cdc2"></div>
<div class="a" style="left:66px;top:108px;width:4px;height:1.5px;background:#dcb49c"></div>
<div class="a" style="left:71px;top:108px;width:9px;height:1.5px;background:#a8cdc2"></div>
<div class="a" style="left:24px;top:111px;width:5px;height:1.5px;background:#a9bdd8"></div>
<div class="a" style="left:30px;top:111px;width:7px;height:1.5px;background:#dcb49c"></div>
<div class="a" style="left:38px;top:111px;width:29px;height:1.5px;background:#a8cdc2"></div>
<div class="a" style="left:68px;top:111px;width:5px;height:1.5px;background:#dcb49c"></div>
<div class="a" style="left:74px;top:111px;width:6px;height:1.5px;background:#a8cdc2"></div>
<div class="a" style="left:24px;top:114px;width:7px;height:1.5px;background:#a9bdd8"></div>
<div class="a" style="left:32px;top:114px;width:7px;height:1.5px;background:#dcb49c"></div>
<div class="a" style="left:40px;top:114px;width:21px;height:1.5px;background:#a8cdc2"></div>
<div class="a" style="left:28px;top:117px;width:7px;height:1.5px;background:#a9bdd8"></div>
<div class="a" style="left:36px;top:117px;width:8px;height:1.5px;background:#dcb49c"></div>
<div class="a" style="left:45px;top:117px;width:24px;height:1.5px;background:#a8cdc2"></div>
<div class="a" style="left:24px;top:120px;width:6px;height:1.5px;background:#a9bdd8"></div>
<div class="a" style="left:31px;top:120px;width:5px;height:1.5px;background:#dcb49c"></div>
<div class="a" style="left:37px;top:120px;width:33px;height:1.5px;background:#a8cdc2"></div>
<div class="a" style="left:71px;top:120px;width:6px;height:1.5px;background:#dcb49c"></div>
<div class="a" style="left:78px;top:120px;width:2px;height:1.5px;background:#a8cdc2"></div>
<div class="a" style="left:20px;top:123px;width:9px;height:1.5px;background:#a9bdd8"></div>
<div class="a" style="left:30px;top:123px;width:5px;height:1.5px;background:#dcb49c"></div>
<div class="a" style="left:36px;top:123px;width:16px;height:1.5px;background:#a8cdc2"></div>
<div class="a" style="left:24px;top:126px;width:8px;height:1.5px;background:#a9bdd8"></div>
<div class="a" style="left:33px;top:126px;width:5px;height:1.5px;background:#dcb49c"></div>
<div class="a" style="left:39px;top:126px;width:34px;height:1.5px;background:#a8cdc2"></div>
<div class="a" style="left:24px;top:129px;width:9px;height:1.5px;background:#a9bdd8"></div>
<div class="a" style="left:20px;top:132px;width:9px;height:1.5px;background:#a9bdd8"></div>
<div class="a" style="left:16px;top:135px;width:8px;height:1.5px;background:#a9bdd8"></div>
<div class="a" style="left:25px;top:135px;width:6px;height:1.5px;background:#dcb49c"></div>
<div class="a" style="left:32px;top:135px;width:21px;height:1.5px;background:#a8cdc2"></div>
<div class="a" style="left:16px;top:138px;width:8px;height:1.5px;background:#a9bdd8"></div>
<div class="a" style="left:25px;top:138px;width:7px;height:1.5px;background:#dcb49c"></div>
<div class="a" style="left:33px;top:138px;width:30px;height:1.5px;background:#a8cdc2"></div>
<div class="a" style="left:64px;top:138px;width:5px;height:1.5px;background:#dcb49c"></div>
<div class="a" style="left:70px;top:138px;width:10px;height:1.5px;background:#a8cdc2"></div>
<div class="a" style="left:20px;top:141px;width:5px;height:1.5px;background:#a9bdd8"></div>
<div class="a" style="left:24px;top:144px;width:9px;height:1.5px;background:#a9bdd8"></div>
<div class="a" style="left:24px;top:147px;width:5px;height:1.5px;background:#a9bdd8"></div>
<div class="a" style="left:30px;top:147px;width:7px;height:1.5px;background:#dcb49c"></div>
<div class="a" style="left:38px;top:147px;width:33px;height:1.5px;background:#a8cdc2"></div>
<div class="a" style="left:72px;top:147px;width:4px;height:1.5px;background:#dcb49c"></div>
<div class="a" style="left:77px;top:147px;width:3px;height:1.5px;background:#a8cdc2"></div>
<div class="a" style="left:20px;top:150px;width:6px;height:1.5px;background:#a9bdd8"></div>
<div class="a" style="left:27px;top:150px;width:6px;height:1.5px;background:#dcb49c"></div>
<div class="a" style="left:34px;top:150px;width:32px;height:1.5px;background:#a8cdc2"></div>
<div class="a" style="left:24px;top:153px;width:6px;height:1.5px;background:#a9bdd8"></div>
<div class="a" style="left:31px;top:153px;width:7px;height:1.5px;background:#dcb49c"></div>
<div class="a" style="left:39px;top:153px;width:21px;height:1.5px;background:#a8cdc2"></div>
<div class="a" style="left:61px;top:153px;width:4px;height:1.5px;background:#dcb49c"></div>
<div class="a" style="left:66px;top:153px;width:9px;height:1.5px;background:#a8cdc2"></div>
<div class="a" style="left:20px;top:156px;width:7px;height:1.5px;background:#a9bdd8"></div>
<div class="a" style="left:28px;top:156px;width:6px;height:1.5px;background:#dcb49c"></div>
<div class="a" style="left:35px;top:156px;width:25px;height:1.5px;background:#a8cdc2"></div>
<div class="a" style="left:16px;top:159px;width:8px;height:1.5px;background:#a9bdd8"></div>
<div class="a" style="left:16px;top:162px;width:7px;height:1.5px;background:#a9bdd8"></div>
<div class="a" style="left:16px;top:165px;width:6px;height:1.5px;background:#a9bdd8"></div>
<div class="a" style="left:23px;top:165px;width:5px;height:1.5px;background:#dcb49c"></div>
<div class="a" style="left:29px;top:165px;width:31px;height:1.5px;background:#a8cdc2"></div>
<div class="a" style="left:61px;top:165px;width:7px;height:1.5px;background:#dcb49c"></div>
<div class="a" style="left:69px;top:165px;width:11px;height:1.5px;background:#a8cdc2"></div>
<div class="a" style="left:20px;top:168px;width:9px;height:1.5px;background:#a9bdd8"></div>
<div class="a" style="left:30px;top:168px;width:8px;height:1.5px;background:#dcb49c"></div>
<div class="a" style="left:39px;top:168px;width:15px;height:1.5px;background:#a8cdc2"></div>
<div class="a" style="left:24px;top:171px;width:9px;height:1.5px;background:#a9bdd8"></div>
<div class="a" style="left:34px;top:171px;width:8px;height:1.5px;background:#dcb49c"></div>
<div class="a" style="left:43px;top:171px;width:24px;height:1.5px;background:#a8cdc2"></div>
<div class="a" style="left:24px;top:174px;width:4px;height:1.5px;background:#a9bdd8"></div>
<div class="a" style="left:29px;top:174px;width:6px;height:1.5px;background:#dcb49c"></div>
<div class="a" style="left:36px;top:174px;width:14px;height:1.5px;background:#a8cdc2"></div>
<div class="a" style="left:51px;top:174px;width:8px;height:1.5px;background:#dcb49c"></div>
<div class="a" style="left:60px;top:174px;width:20px;height:1.5px;background:#a8cdc2"></div>
<div class="a" style="left:20px;top:177px;width:7px;height:1.5px;background:#a9bdd8"></div>
<div class="a" style="left:24px;top:180px;width:5px;height:1.5px;background:#a9bdd8"></div>
<div class="a" style="left:30px;top:180px;width:8px;height:1.5px;background:#dcb49c"></div>
<div class="a" style="left:39px;top:180px;width:31px;height:1.5px;background:#a8cdc2"></div>
<div class="a" style="left:24px;top:183px;width:5px;height:1.5px;background:#a9bdd8"></div>
<div class="a" style="left:30px;top:183px;width:6px;height:1.5px;background:#dcb49c"></div>
<div class="a" style="left:37px;top:183px;width:10px;height:1.5px;background:#a8cdc2"></div>
<div class="a" style="left:48px;top:183px;width:4px;height:1.5px;background:#dcb49c"></div>
<div class="a" style="left:53px;top:183px;width:14px;height:1.5px;background:#a8cdc2"></div>
<div class="a" style="left:20px;top:186px;width:9px;height:1.5px;background:#a9bdd8"></div>
<div class="a" style="left:24px;top:189px;width:7px;height:1.5px;background:#a9bdd8"></div>
<div class="a" style="left:24px;top:192px;width:5px;height:1.5px;background:#a9bdd8"></div>
<div class="a" style="left:20px;top:195px;width:5px;height:1.5px;background:#a9bdd8"></div>
<div class="a" style="left:26px;top:195px;width:6px;height:1.5px;background:#dcb49c"></div>
<div class="a" style="left:33px;top:195px;width:19px;height:1.5px;background:#a8cdc2"></div>
<div class="a" style="left:16px;top:198px;width:8px;height:1.5px;background:#a9bdd8"></div>
<div class="a" style="left:25px;top:198px;width:8px;height:1.5px;background:#dcb49c"></div>
<div class="a" style="left:34px;top:198px;width:14px;height:1.5px;background:#a8cdc2"></div>
<div class="a" style="left:49px;top:198px;width:6px;height:1.5px;background:#dcb49c"></div>
<div class="a" style="left:56px;top:198px;width:20px;height:1.5px;background:#a8cdc2"></div>
<div class="a" style="left:16px;top:201px;width:7px;height:1.5px;background:#a9bdd8"></div>
<div class="a" style="left:24px;top:201px;width:8px;height:1.5px;background:#dcb49c"></div>
<div class="a" style="left:33px;top:201px;width:26px;height:1.5px;background:#a8cdc2"></div>
<div class="a" style="left:60px;top:201px;width:5px;height:1.5px;background:#dcb49c"></div>
<div class="a" style="left:66px;top:201px;width:14px;height:1.5px;background:#a8cdc2"></div>
<div class="a" style="left:20px;top:204px;width:8px;height:1.5px;background:#a9bdd8"></div>
<div class="a" style="left:29px;top:204px;width:8px;height:1.5px;background:#dcb49c"></div>
<div class="a" style="left:38px;top:204px;width:34px;height:1.5px;background:#a8cdc2"></div>
<div class="a" style="left:73px;top:204px;width:4px;height:1.5px;background:#dcb49c"></div>
<div class="a" style="left:78px;top:204px;width:2px;height:1.5px;background:#a8cdc2"></div>
<div class="a" style="left:20px;top:207px;width:5px;height:1.5px;background:#a9bdd8"></div>
<div class="a" style="left:26px;top:207px;width:8px;height:1.5px;background:#dcb49c"></div>
<div class="a" style="left:35px;top:207px;width:29px;height:1.5px;background:#a8cdc2"></div>
<div class="a" style="left:24px;top:210px;width:8px;height:1.5px;background:#a9bdd8"></div>
<div class="a" style="left:33px;top:210px;width:8px;height:1.5px;background:#dcb49c"></div>
<div class="a" style="left:42px;top:210px;width:35px;height:1.5px;background:#a8cdc2"></div>
<div class="a" style="left:24px;top:213px;width:8px;height:1.5px;background:#a9bdd8"></div>
<div class="a" style="left:33px;top:213px;width:6px;height:1.5px;background:#dcb49c"></div>
<div class="a" style="left:40px;top:213px;width:18px;height:1.5px;background:#a8cdc2"></div>
<div class="a" style="left:59px;top:213px;width:4px;height:1.5px;background:#dcb49c"></div>
<div class="a" style="left:64px;top:213px;width:14px;height:1.5px;background:#a8cdc2"></div>
<div class="a" style="left:24px;top:216px;width:7px;height:1.5px;background:#a9bdd8"></div>
<div class="a" style="left:32px;top:216px;width:5px;height:1.5px;background:#dcb49c"></div>
<div class="a" style="left:38px;top:216px;width:24px;height:1.5px;background:#a8cdc2"></div>
<div class="a" style="left:63px;top:216px;width:8px;height:1.5px;background:#dcb49c"></div>
<div class="a" style="left:72px;top:216px;width:8px;height:1.5px;background:#a8cdc2"></div>
<div class="a" style="left:24px;top:219px;width:8px;height:1.5px;background:#a9bdd8"></div>
<div class="a" style="left:33px;top:219px;width:7px;height:1.5px;background:#dcb49c"></div>
<div class="a" style="left:41px;top:219px;width:24px;height:1.5px;background:#a8cdc2"></div>
<div class="a" style="left:24px;top:222px;width:7px;height:1.5px;background:#a9bdd8"></div>
<div class="a" style="left:32px;top:222px;width:6px;height:1.5px;background:#dcb49c"></div>
<div class="a" style="left:39px;top:222px;width:32px;height:1.5px;background:#a8cdc2"></div>
<div class="a" style="left:24px;top:225px;width:6px;height:1.5px;background:#a9bdd8"></div>
<div class="a" style="left:20px;top:228px;width:5px;height:1.5px;background:#a9bdd8"></div>
<div class="a" style="left:16px;top:231px;width:5px;height:1.5px;background:#a9bdd8"></div>
<div class="a" style="left:22px;top:231px;width:8px;height:1.5px;background:#dcb49c"></div>
<div class="a" style="left:31px;top:231px;width:24px;height:1.5px;background:#a8cdc2"></div>
<div class="a" style="left:56px;top:231px;width:5px;height:1.5px;background:#dcb49c"></div>
<div class="a" style="left:62px;top:231px;width:12px;height:1.5px;background:#a8cdc2"></div>
<div class="a" style="left:16px;top:234px;width:4px;height:1.5px;background:#a9bdd8"></div>
<div class="a" style="left:21px;top:234px;width:7px;height:1.5px;background:#dcb49c"></div>
<div class="a" style="left:29px;top:234px;width:35px;height:1.5px;background:#a8cdc2"></div>
<div class="a" style="left:65px;top:234px;width:5px;height:1.5px;background:#dcb49c"></div>
<div class="a" style="left:71px;top:234px;width:9px;height:1.5px;background:#a8cdc2"></div>
<div class="a" style="left:20px;top:237px;width:9px;height:1.5px;background:#a9bdd8"></div>
<div class="a" style="left:30px;top:237px;width:6px;height:1.5px;background:#dcb49c"></div>
<div class="a" style="left:37px;top:237px;width:18px;height:1.5px;background:#a8cdc2"></div>
<div class="a" style="left:20px;top:240px;width:7px;height:1.5px;background:#a9bdd8"></div>
<div class="a" style="left:28px;top:240px;width:5px;height:1.5px;background:#dcb49c"></div>
<div class="a" style="left:34px;top:240px;width:22px;height:1.5px;background:#a8cdc2"></div>
<div class="a" style="left:20px;top:243px;width:5px;height:1.5px;background:#a9bdd8"></div>
<div class="a" style="left:20px;top:246px;width:5px;height:1.5px;background:#a9bdd8"></div>
<div class="a" style="left:26px;top:246px;width:8px;height:1.5px;background:#dcb49c"></div>
<div class="a" style="left:35px;top:246px;width:26px;height:1.5px;background:#a8cdc2"></div>
<div class="a" style="left:20px;top:249px;width:7px;height:1.5px;background:#a9bdd8"></div>
<div class="a" style="left:28px;top:249px;width:7px;height:1.5px;background:#dcb49c"></div>
<div class="a" style="left:36px;top:249px;width:12px;height:1.5px;background:#a8cdc2"></div>
<div class="a" style="left:24px;top:252px;width:4px;height:1.5px;background:#a9bdd8"></div>
<div class="a" style="left:29px;top:252px;width:8px;height:1.5px;background:#dcb49c"></div>
<div class="a" style="left:38px;top:252px;width:24px;height:1.5px;background:#a8cdc2"></div>
<div class="a" style="left:24px;top:255px;width:7px;height:1.5px;background:#a9bdd8"></div>
<div class="a" style="left:32px;top:255px;width:7px;height:1.5px;background:#dcb49c"></div>
<div class="a" style="left:40px;top:255px;width:26px;height:1.5px;background:#a8cdc2"></div>
<div class="a" style="left:24px;top:258px;width:4px;height:1.5px;background:#a9bdd8"></div>
<div class="a" style="left:24px;top:261px;width:5px;height:1.5px;background:#a9bdd8"></div>
<div class="a" style="left:24px;top:264px;width:4px;height:1.5px;background:#a9bdd8"></div>
<div class="a" style="left:29px;top:264px;width:7px;height:1.5px;background:#dcb49c"></div>
<div class="a" style="left:37px;top:264px;width:11px;height:1.5px;background:#a8cdc2"></div>
<div class="a" style="left:20px;top:267px;width:5px;height:1.5px;background:#a9bdd8"></div>
<div class="a" style="left:26px;top:267px;width:6px;height:1.5px;background:#dcb49c"></div>
<div class="a" style="left:33px;top:267px;width:23px;height:1.5px;background:#a8cdc2"></div>
<div class="a" style="left:16px;top:270px;width:9px;height:1.5px;background:#a9bdd8"></div>
<div class="a" style="left:12px;top:273px;width:6px;height:1.5px;background:#a9bdd8"></div>
<div class="a" style="left:19px;top:273px;width:8px;height:1.5px;background:#dcb49c"></div>
<div class="a" style="left:28px;top:273px;width:32px;height:1.5px;background:#a8cdc2"></div>
<div class="a" style="left:61px;top:273px;width:6px;height:1.5px;background:#dcb49c"></div>
<div class="a" style="left:68px;top:273px;width:6px;height:1.5px;background:#a8cdc2"></div>
<div class="a" style="left:12px;top:276px;width:9px;height:1.5px;background:#a9bdd8"></div>
<div class="a" style="left:22px;top:276px;width:5px;height:1.5px;background:#dcb49c"></div>
<div class="a" style="left:28px;top:276px;width:18px;height:1.5px;background:#a8cdc2"></div>
<div class="a" style="left:8px;top:279px;width:9px;height:1.5px;background:#a9bdd8"></div>
<div class="a" style="left:4px;top:282px;width:4px;height:1.5px;background:#a9bdd8"></div>
<div class="a" style="left:4px;top:288px;width:8px;height:1.5px;background:#a9bdd8"></div>
<div class="a" style="left:8px;top:291px;width:5px;height:1.5px;background:#b9b6aa"></div>
<div class="a" style="left:14px;top:291px;width:4px;height:1.5px;background:#b9b6aa"></div>
<div class="a" style="left:19px;top:291px;width:15px;height:1.5px;background:#a8cdc2"></div>
<div class="a" style="left:8px;top:294px;width:3px;height:1.5px;background:#cfc890"></div>
<div class="a" style="left:12px;top:294px;width:6px;height:1.5px;background:#b9b6aa"></div>
<div class="a" style="left:8px;top:297px;width:5px;height:1.5px;background:#b9b6aa"></div>
<div class="a" style="left:14px;top:297px;width:4px;height:1.5px;background:#b9b6aa"></div>
<div class="a" style="left:19px;top:297px;width:23px;height:1.5px;background:#b9b6aa"></div>
<div class="a" style="left:12px;top:300px;width:4px;height:1.5px;background:#cfc890"></div>
<div class="a" style="left:17px;top:300px;width:3px;height:1.5px;background:#b9b6aa"></div>
<div class="a" style="left:21px;top:300px;width:27px;height:1.5px;background:#d0ccbc"></div>
<div class="a" style="left:12px;top:303px;width:5px;height:1.5px;background:#b9b6aa"></div>
<div class="a" style="left:18px;top:303px;width:4px;height:1.5px;background:#b9b6aa"></div>
<div class="a" style="left:23px;top:303px;width:40px;height:1.5px;background:#d0ccbc"></div>
<div class="a" style="left:12px;top:306px;width:4px;height:1.5px;background:#cfc890"></div>
<div class="a" style="left:17px;top:306px;width:5px;height:1.5px;background:#b9b6aa"></div>
<div class="a" style="left:16px;top:309px;width:5px;height:1.5px;background:#b9b6aa"></div>
<div class="a" style="left:22px;top:309px;width:3px;height:1.5px;background:#b9b6aa"></div>
<div class="a" style="left:26px;top:309px;width:40px;height:1.5px;background:#d0ccbc"></div>
<div class="a" style="left:16px;top:312px;width:4px;height:1.5px;background:#b9b6aa"></div>
<div class="a" style="left:21px;top:312px;width:6px;height:1.5px;background:#b9b6aa"></div>
<div class="a" style="left:28px;top:312px;width:36px;height:1.5px;background:#b9b6aa"></div>
<div class="a" style="left:16px;top:315px;width:8px;height:1.5px;background:#b9b6aa"></div>
<div class="a" style="left:25px;top:315px;width:6px;height:1.5px;background:#b9b6aa"></div>
<div class="a" style="left:16px;top:318px;width:7px;height:1.5px;background:#cfc890"></div>
<div class="a" style="left:24px;top:318px;width:5px;height:1.5px;background:#b9b6aa"></div>
<div class="a" style="left:20px;top:321px;width:4px;height:1.5px;background:#cfc890"></div>
<div class="a" style="left:25px;top:321px;width:4px;height:1.5px;background:#b9b6aa"></div>
<div class="a" style="left:20px;top:324px;width:8px;height:1.5px;background:#b9b6aa"></div>
<div class="a" style="left:29px;top:324px;width:4px;height:1.5px;background:#b9b6aa"></div>
<div class="a" style="left:34px;top:324px;width:30px;height:1.5px;background:#b9b6aa"></div>
<div class="a" style="left:16px;top:327px;width:4px;height:1.5px;background:#b9b6aa"></div>
<div class="a" style="left:21px;top:327px;width:3px;height:1.5px;background:#b9b6aa"></div>
<div class="a" style="left:16px;top:330px;width:5px;height:1.5px;background:#cfc890"></div>
<div class="a" style="left:22px;top:330px;width:4px;height:1.5px;background:#b9b6aa"></div>
<div class="a" style="left:27px;top:330px;width:32px;height:1.5px;background:#d0ccbc"></div>
<div class="a" style="left:20px;top:333px;width:8px;height:1.5px;background:#cfc890"></div>
<div class="a" style="left:29px;top:333px;width:4px;height:1.5px;background:#b9b6aa"></div>
<div class="a" style="left:20px;top:336px;width:3px;height:1.5px;background:#cfc890"></div>
<div class="a" style="left:24px;top:336px;width:4px;height:1.5px;background:#b9b6aa"></div>
<div class="a" style="left:29px;top:336px;width:36px;height:1.5px;background:#b9b6aa"></div>
<div class="a" style="left:16px;top:339px;width:5px;height:1.5px;background:#cfc890"></div>
<div class="a" style="left:22px;top:339px;width:5px;height:1.5px;background:#b9b6aa"></div>
<div class="a" style="left:16px;top:342px;width:7px;height:1.5px;background:#cfc890"></div>
<div class="a" style="left:24px;top:342px;width:4px;height:1.5px;background:#b9b6aa"></div>
<div class="a" style="left:29px;top:342px;width:27px;height:1.5px;background:#b9b6aa"></div>
<div class="a" style="left:12px;top:345px;width:5px;height:1.5px;background:#b9b6aa"></div>
<div class="a" style="left:18px;top:345px;width:3px;height:1.5px;background:#b9b6aa"></div>
<div class="a" style="left:22px;top:345px;width:13px;height:1.5px;background:#a8cdc2"></div>
<div class="a" style="left:12px;top:348px;width:5px;height:1.5px;background:#b9b6aa"></div>
<div class="a" style="left:18px;top:348px;width:4px;height:1.5px;background:#b9b6aa"></div>
<div class="a" style="left:23px;top:348px;width:8px;height:1.5px;background:#b9b6aa"></div>
<div class="a" style="left:12px;top:351px;width:5px;height:1.5px;background:#b9b6aa"></div>
<div class="a" style="left:18px;top:351px;width:4px;height:1.5px;background:#b9b6aa"></div>
<div class="a" style="left:23px;top:351px;width:10px;height:1.5px;background:#a8cdc2"></div>
<div class="a" style="left:16px;top:354px;width:3px;height:1.5px;background:#cfc890"></div>
<div class="a" style="left:20px;top:354px;width:5px;height:1.5px;background:#b9b6aa"></div>
<div class="a" style="left:16px;top:357px;width:3px;height:1.5px;background:#b9b6aa"></div>
<div class="a" style="left:20px;top:357px;width:4px;height:1.5px;background:#b9b6aa"></div>
<div class="a" style="left:16px;top:360px;width:8px;height:1.5px;background:#b9b6aa"></div>
<div class="a" style="left:25px;top:360px;width:6px;height:1.5px;background:#b9b6aa"></div>
<div class="a" style="left:12px;top:363px;width:8px;height:1.5px;background:#cfc890"></div>
<div class="a" style="left:21px;top:363px;width:4px;height:1.5px;background:#b9b6aa"></div>
<div class="a" style="left:26px;top:363px;width:17px;height:1.5px;background:#b9b6aa"></div>
<div class="a" style="left:8px;top:366px;width:8px;height:1.5px;background:#b9b6aa"></div>
<div class="a" style="left:17px;top:366px;width:6px;height:1.5px;background:#b9b6aa"></div>
<div class="a" style="left:8px;top:369px;width:7px;height:1.5px;background:#b9b6aa"></div>
<div class="a" style="left:16px;top:369px;width:3px;height:1.5px;background:#b9b6aa"></div>
<div class="a" style="left:12px;top:372px;width:7px;height:1.5px;background:#b9b6aa"></div>
<div class="a" style="left:20px;top:372px;width:4px;height:1.5px;background:#b9b6aa"></div>
<div class="a" style="left:25px;top:372px;width:10px;height:1.5px;background:#b9b6aa"></div>
<div class="a" style="left:16px;top:375px;width:8px;height:1.5px;background:#cfc890"></div>
<div class="a" style="left:25px;top:375px;width:3px;height:1.5px;background:#b9b6aa"></div>
<div class="a" style="left:29px;top:375px;width:36px;height:1.5px;background:#d0ccbc"></div>
<div class="a" style="left:16px;top:378px;width:3px;height:1.5px;background:#b9b6aa"></div>
<div class="a" style="left:20px;top:378px;width:3px;height:1.5px;background:#b9b6aa"></div>
<div class="a" style="left:16px;top:381px;width:8px;height:1.5px;background:#b9b6aa"></div>
<div class="a" style="left:25px;top:381px;width:6px;height:1.5px;background:#b9b6aa"></div>
<div class="a" style="left:32px;top:381px;width:37px;height:1.5px;background:#b9b6aa"></div>
<div class="a" style="left:16px;top:384px;width:8px;height:1.5px;background:#b9b6aa"></div>
<div class="a" style="left:25px;top:384px;width:3px;height:1.5px;background:#b9b6aa"></div>
<div class="a" style="left:16px;top:387px;width:3px;height:1.5px;background:#b9b6aa"></div>
<div class="a" style="left:20px;top:387px;width:6px;height:1.5px;background:#b9b6aa"></div>
<div class="a" style="left:27px;top:387px;width:12px;height:1.5px;background:#a8cdc2"></div>
<div class="a" style="left:20px;top:390px;width:4px;height:1.5px;background:#b9b6aa"></div>
<div class="a" style="left:25px;top:390px;width:4px;height:1.5px;background:#b9b6aa"></div>
<div class="a" style="left:30px;top:390px;width:37px;height:1.5px;background:#a8cdc2"></div>
<div class="a" style="left:20px;top:393px;width:6px;height:1.5px;background:#b9b6aa"></div>
<div class="a" style="left:27px;top:393px;width:6px;height:1.5px;background:#b9b6aa"></div>
<div class="a" style="left:20px;top:396px;width:5px;height:1.5px;background:#b9b6aa"></div>
<div class="a" style="left:26px;top:396px;width:4px;height:1.5px;background:#b9b6aa"></div>
<div class="a" style="left:31px;top:396px;width:17px;height:1.5px;background:#a8cdc2"></div>
<div class="a" style="left:16px;top:399px;width:5px;height:1.5px;background:#b9b6aa"></div>
<div class="a" style="left:22px;top:399px;width:5px;height:1.5px;background:#b9b6aa"></div>
<div class="a" style="left:12px;top:402px;width:4px;height:1.5px;background:#b9b6aa"></div>
<div class="a" style="left:17px;top:402px;width:6px;height:1.5px;background:#b9b6aa"></div>
<div class="a" style="left:24px;top:402px;width:25px;height:1.5px;background:#d0ccbc"></div>
<div class="a" style="left:12px;top:405px;width:3px;height:1.5px;background:#b9b6aa"></div>
<div class="a" style="left:16px;top:405px;width:4px;height:1.5px;background:#b9b6aa"></div>
<div class="a" style="left:16px;top:408px;width:5px;height:1.5px;background:#b9b6aa"></div>
<div class="a" style="left:22px;top:408px;width:5px;height:1.5px;background:#b9b6aa"></div>
<div class="a" style="left:28px;top:408px;width:37px;height:1.5px;background:#b9b6aa"></div>
<div class="a" style="left:16px;top:411px;width:7px;height:1.5px;background:#b9b6aa"></div>
<div class="a" style="left:24px;top:411px;width:5px;height:1.5px;background:#b9b6aa"></div>
<div class="a" style="left:20px;top:414px;width:6px;height:1.5px;background:#b9b6aa"></div>
<div class="a" style="left:27px;top:414px;width:5px;height:1.5px;background:#b9b6aa"></div>
<div class="a" style="left:33px;top:414px;width:40px;height:1.5px;background:#a8cdc2"></div>
<div class="a" style="left:20px;top:417px;width:5px;height:1.5px;background:#cfc890"></div>
<div class="a" style="left:26px;top:417px;width:4px;height:1.5px;background:#b9b6aa"></div>
<div class="a" style="left:24px;top:420px;width:4px;height:1.5px;background:#b9b6aa"></div>
<div class="a" style="left:29px;top:420px;width:3px;height:1.5px;background:#b9b6aa"></div>
<div class="a" style="left:33px;top:420px;width:24px;height:1.5px;background:#a8cdc2"></div>
<div class="a" style="left:24px;top:423px;width:4px;height:1.5px;background:#b9b6aa"></div>
<div class="a" style="left:29px;top:423px;width:5px;height:1.5px;background:#b9b6aa"></div>
<div class="a" style="left:20px;top:426px;width:8px;height:1.5px;background:#cfc890"></div>
<div class="a" style="left:29px;top:426px;width:4px;height:1.5px;background:#b9b6aa"></div>
<div class="a" style="left:34px;top:426px;width:39px;height:1.5px;background:#a8cdc2"></div>
<div class="a" style="left:16px;top:429px;width:3px;height:1.5px;background:#b9b6aa"></div>
<div class="a" style="left:20px;top:429px;width:3px;height:1.5px;background:#b9b6aa"></div>
<div class="a" style="left:12px;top:432px;width:8px;height:1.5px;background:#cfc890"></div>
<div class="a" style="left:21px;top:432px;width:6px;height:1.5px;background:#b9b6aa"></div>
<div class="a" style="left:28px;top:432px;width:17px;height:1.5px;background:#a8cdc2"></div>
<div class="a" style="left:8px;top:435px;width:5px;height:1.5px;background:#cfc890"></div>
<div class="a" style="left:14px;top:435px;width:5px;height:1.5px;background:#b9b6aa"></div>
<div class="a" style="left:20px;top:435px;width:29px;height:1.5px;background:#b9b6aa"></div>
<div class="a" style="left:8px;top:438px;width:5px;height:1.5px;background:#cfc890"></div>
<div class="a" style="left:14px;top:438px;width:6px;height:1.5px;background:#b9b6aa"></div>
<div class="a" style="left:21px;top:438px;width:20px;height:1.5px;background:#d0ccbc"></div>
<div class="a" style="left:12px;top:441px;width:3px;height:1.5px;background:#b9b6aa"></div>
<div class="a" style="left:16px;top:441px;width:5px;height:1.5px;background:#b9b6aa"></div>
<div class="a" style="left:22px;top:441px;width:12px;height:1.5px;background:#a8cdc2"></div>
<div class="a" style="left:16px;top:444px;width:6px;height:1.5px;background:#b9b6aa"></div>
<div class="a" style="left:23px;top:444px;width:3px;height:1.5px;background:#b9b6aa"></div>
<div class="a" style="left:27px;top:444px;width:35px;height:1.5px;background:#a8cdc2"></div>
<div class="a" style="left:16px;top:447px;width:3px;height:1.5px;background:#cfc890"></div>
<div class="a" style="left:20px;top:447px;width:3px;height:1.5px;background:#b9b6aa"></div>
<div class="a" style="left:24px;top:447px;width:26px;height:1.5px;background:#d0ccbc"></div>
<div class="a" style="left:20px;top:450px;width:4px;height:1.5px;background:#b9b6aa"></div>
<div class="a" style="left:25px;top:450px;width:5px;height:1.5px;background:#b9b6aa"></div>
<div class="a" style="left:31px;top:450px;width:28px;height:1.5px;background:#b9b6aa"></div>
<div class="a" style="left:20px;top:453px;width:5px;height:1.5px;background:#cfc890"></div>
<div class="a" style="left:26px;top:453px;width:3px;height:1.5px;background:#b9b6aa"></div>
<div class="a" style="left:16px;top:456px;width:8px;height:1.5px;background:#cfc890"></div>
<div class="a" style="left:25px;top:456px;width:4px;height:1.5px;background:#b9b6aa"></div>
<div class="a" style="left:12px;top:459px;width:3px;height:1.5px;background:#b9b6aa"></div>
<div class="a" style="left:16px;top:459px;width:6px;height:1.5px;background:#b9b6aa"></div>
<div class="a" style="left:23px;top:459px;width:16px;height:1.5px;background:#d0ccbc"></div>
<div class="a" style="left:8px;top:462px;width:5px;height:1.5px;background:#cfc890"></div>
<div class="a" style="left:14px;top:462px;width:3px;height:1.5px;background:#b9b6aa"></div>
<div class="a" style="left:4px;top:465px;width:7px;height:1.5px;background:#b9b6aa"></div>
<div class="a" style="left:12px;top:465px;width:4px;height:1.5px;background:#b9b6aa"></div>
<div class="a" style="left:17px;top:465px;width:29px;height:1.5px;background:#a8cdc2"></div>
<div class="a" style="left:4px;top:471px;width:6px;height:1.5px;background:#cfc890"></div>
<div class="a" style="left:11px;top:471px;width:5px;height:1.5px;background:#b9b6aa"></div>
<div class="a" style="left:17px;top:471px;width:15px;height:1.5px;background:#b9b6aa"></div>
<div class="a" style="left:8px;top:474px;width:7px;height:1.5px;background:#b9b6aa"></div>
<div class="a" style="left:16px;top:474px;width:6px;height:1.5px;background:#b9b6aa"></div>
<div class="a" style="left:23px;top:474px;width:28px;height:1.5px;background:#a8cdc2"></div>
<div class="a" style="left:8px;top:477px;width:4px;height:1.5px;background:#a9bdd8"></div>
<div class="a" style="left:13px;top:477px;width:6px;height:1.5px;background:#b9b6aa"></div>
<div class="a" style="left:20px;top:477px;width:22px;height:1.5px;background:#b9b6aa"></div>
<div class="a" style="left:12px;top:480px;width:10px;height:1.5px;background:#cfc890"></div>
<div class="a" style="left:23px;top:480px;width:6px;height:1.5px;background:#b9b6aa"></div>
<div class="a" style="left:30px;top:480px;width:14px;height:1.5px;background:#a8cdc2"></div>
<div class="a" style="left:12px;top:483px;width:4px;height:1.5px;background:#a9bdd8"></div>
<div class="a" style="left:17px;top:483px;width:5px;height:1.5px;background:#b9b6aa"></div>
<div class="a" style="left:23px;top:483px;width:18px;height:1.5px;background:#a8cdc2"></div>
<div class="a" style="left:12px;top:486px;width:6px;height:1.5px;background:#cfc890"></div>
<div class="a" style="left:19px;top:486px;width:4px;height:1.5px;background:#b9b6aa"></div>
<div class="a" style="left:16px;top:489px;width:9px;height:1.5px;background:#cfc890"></div>
<div class="a" style="left:26px;top:489px;width:6px;height:1.5px;background:#b9b6aa"></div>
<div class="a" style="left:33px;top:489px;width:24px;height:1.5px;background:#a8cdc2"></div>
<div class="a" style="left:16px;top:492px;width:7px;height:1.5px;background:#cfc890"></div>
<div class="a" style="left:24px;top:492px;width:5px;height:1.5px;background:#b9b6aa"></div>
<div class="a" style="left:12px;top:495px;width:7px;height:1.5px;background:#cfc890"></div>
<div class="a" style="left:20px;top:495px;width:5px;height:1.5px;background:#b9b6aa"></div>
<div class="a" style="left:26px;top:495px;width:24px;height:1.5px;background:#cfc890"></div>
<div class="a" style="left:12px;top:498px;width:9px;height:1.5px;background:#a9bdd8"></div>
<div class="a" style="left:22px;top:498px;width:3px;height:1.5px;background:#b9b6aa"></div>
<div class="a" style="left:26px;top:498px;width:15px;height:1.5px;background:#b9b6aa"></div>
<div class="a" style="left:16px;top:501px;width:7px;height:1.5px;background:#b9b6aa"></div>
<div class="a" style="left:24px;top:501px;width:6px;height:1.5px;background:#b9b6aa"></div>
<div class="a" style="left:31px;top:501px;width:17px;height:1.5px;background:#a8cdc2"></div>
<div class="a" style="left:16px;top:504px;width:5px;height:1.5px;background:#a9bdd8"></div>
<div class="a" style="left:22px;top:504px;width:6px;height:1.5px;background:#b9b6aa"></div>
<div class="a" style="left:16px;top:507px;width:10px;height:1.5px;background:#cfc890"></div>
<div class="a" style="left:27px;top:507px;width:6px;height:1.5px;background:#b9b6aa"></div>
<div class="a" style="left:34px;top:507px;width:20px;height:1.5px;background:#cfc890"></div>
<div class="a" style="left:12px;top:510px;width:10px;height:1.5px;background:#cfc890"></div>
<div class="a" style="left:23px;top:510px;width:6px;height:1.5px;background:#b9b6aa"></div>
<div class="a" style="left:30px;top:510px;width:11px;height:1.5px;background:#a8cdc2"></div>
<div class="a" style="left:8px;top:513px;width:5px;height:1.5px;background:#a9bdd8"></div>
<div class="a" style="left:14px;top:513px;width:3px;height:1.5px;background:#b9b6aa"></div>
<div class="a" style="left:12px;top:516px;width:9px;height:1.5px;background:#b9b6aa"></div>
<div class="a" style="left:22px;top:516px;width:6px;height:1.5px;background:#b9b6aa"></div>
<div class="a" style="left:29px;top:516px;width:9px;height:1.5px;background:#a8cdc2"></div>
<div class="a" style="left:12px;top:519px;width:10px;height:1.5px;background:#a9bdd8"></div>
<div class="a" style="left:23px;top:519px;width:4px;height:1.5px;background:#b9b6aa"></div>
<div class="a" style="left:28px;top:519px;width:9px;height:1.5px;background:#cfc890"></div>
<div class="a" style="left:16px;top:522px;width:9px;height:1.5px;background:#cfc890"></div>
<div class="a" style="left:26px;top:522px;width:4px;height:1.5px;background:#b9b6aa"></div>
<div class="a" style="left:31px;top:522px;width:24px;height:1.5px;background:#cfc890"></div>
<div class="a" style="left:16px;top:525px;width:7px;height:1.5px;background:#b9b6aa"></div>
<div class="a" style="left:24px;top:525px;width:3px;height:1.5px;background:#b9b6aa"></div>
<div class="a" style="left:28px;top:525px;width:17px;height:1.5px;background:#cfc890"></div>
<div class="a" style="left:12px;top:528px;width:8px;height:1.5px;background:#a9bdd8"></div>
<div class="a" style="left:21px;top:528px;width:6px;height:1.5px;background:#b9b6aa"></div>
<div class="a" style="left:28px;top:528px;width:27px;height:1.5px;background:#a8cdc2"></div>
<div class="a" style="left:8px;top:531px;width:4px;height:1.5px;background:#b9b6aa"></div>
<div class="a" style="left:13px;top:531px;width:5px;height:1.5px;background:#b9b6aa"></div>
<div class="a" style="left:8px;top:534px;width:6px;height:1.5px;background:#cfc890"></div>
<div class="a" style="left:15px;top:534px;width:4px;height:1.5px;background:#b9b6aa"></div>
<div class="a" style="left:20px;top:534px;width:15px;height:1.5px;background:#cfc890"></div>
<div class="a" style="left:12px;top:537px;width:5px;height:1.5px;background:#a9bdd8"></div>
<div class="a" style="left:18px;top:537px;width:6px;height:1.5px;background:#b9b6aa"></div>
<div class="a" style="left:16px;top:540px;width:6px;height:1.5px;background:#a9bdd8"></div>
<div class="a" style="left:23px;top:540px;width:3px;height:1.5px;background:#b9b6aa"></div>
<div class="a" style="left:27px;top:540px;width:29px;height:1.5px;background:#cfc890"></div>
<div class="a" style="left:16px;top:543px;width:7px;height:1.5px;background:#a9bdd8"></div>
<div class="a" style="left:24px;top:543px;width:5px;height:1.5px;background:#b9b6aa"></div>
<div class="a" style="left:30px;top:543px;width:21px;height:1.5px;background:#b9b6aa"></div>
<div class="a" style="left:16px;top:546px;width:5px;height:1.5px;background:#cfc890"></div>
<div class="a" style="left:22px;top:546px;width:3px;height:1.5px;background:#b9b6aa"></div>
<div class="a" style="left:26px;top:546px;width:30px;height:1.5px;background:#b9b6aa"></div>
<div class="a" style="left:12px;top:549px;width:6px;height:1.5px;background:#b9b6aa"></div>
<div class="a" style="left:19px;top:549px;width:6px;height:1.5px;background:#b9b6aa"></div>
<div class="a" style="left:26px;top:549px;width:17px;height:1.5px;background:#cfc890"></div>
<div class="a" style="left:12px;top:552px;width:10px;height:1.5px;background:#b9b6aa"></div>
<div class="a" style="left:23px;top:552px;width:3px;height:1.5px;background:#b9b6aa"></div>
<div class="a" style="left:27px;top:552px;width:14px;height:1.5px;background:#b9b6aa"></div>
<div class="a" style="left:16px;top:555px;width:10px;height:1.5px;background:#a9bdd8"></div>
<div class="a" style="left:27px;top:555px;width:4px;height:1.5px;background:#b9b6aa"></div>
<div class="a" style="left:32px;top:555px;width:16px;height:1.5px;background:#b9b6aa"></div>
<div class="a" style="left:20px;top:558px;width:4px;height:1.5px;background:#b9b6aa"></div>
<div class="a" style="left:25px;top:558px;width:6px;height:1.5px;background:#b9b6aa"></div>
<div class="a" style="left:32px;top:558px;width:15px;height:1.5px;background:#b9b6aa"></div>
<div class="a" style="left:16px;top:561px;width:7px;height:1.5px;background:#b9b6aa"></div>
<div class="a" style="left:24px;top:561px;width:3px;height:1.5px;background:#b9b6aa"></div>
<div class="a" style="left:12px;top:564px;width:5px;height:1.5px;background:#cfc890"></div>
<div class="a" style="left:18px;top:564px;width:3px;height:1.5px;background:#b9b6aa"></div>
<div class="a" style="left:22px;top:564px;width:27px;height:1.5px;background:#a8cdc2"></div>
<div class="a" style="left:8px;top:567px;width:7px;height:1.5px;background:#a9bdd8"></div>
<div class="a" style="left:16px;top:567px;width:3px;height:1.5px;background:#b9b6aa"></div>
<div class="a" style="left:20px;top:567px;width:22px;height:1.5px;background:#cfc890"></div>
</div>
<div class="a" style="left:985px;top:106px;width:8px;height:41px;background:#c9b068"></div>
<div class="a" style="left:993px;top:60px;width:1px;height:818px;background:#ddd3b0"></div>
<!-- /EDITOR -->
<!-- CONSOLE -->
<div class="t" style="left:23px;top:703px;font-size:14.4px;color:#222">ql3 - Web</div>
<div class="a" style="left:18px;top:724px;width:91px;height:1px;background:#4f9a66"></div>
<div class="t" style="left:32px;top:743px;font-family:'Liberation Mono',monospace;font-size:15px;line-height:20px"><span style="color:#8a8a8a">09:40:14.483 </span><span style="color:#333">list start </span><span style="color:#1c2566;text-decoration:underline">at pages/tabbarPages/home/common/scroll.vue:58</span></div>
<div class="t" style="left:32px;top:763px;font-family:'Liberation Mono',monospace;font-size:15px;line-height:20px"><span style="color:#8a8a8a">09:40:16.837 </span><span style="color:#333">[HMR] Waiting for update signal from WDS...</span></div>
<div class="t" style="left:32px;top:783px;font-family:'Liberation Mono',monospace;font-size:15px;line-height:20px"><span style="color:#8a8a8a">09:40:27.543 </span><span style="color:#333">[HMR] Waiting for update signal from WDS...</span></div>
<div class="t" style="left:32px;top:803px;font-family:'Liberation Mono',monospace;font-size:15px;line-height:20px"><span style="color:#8a8a8a">09:40:27.784 </span><span style="color:#333">list start </span><span style="color:#1c2566;text-decoration:underline">at pages/tabbarPages/home/common/scroll.vue:58</span></div>
<div class="t" style="left:32px;top:823px;font-family:'Liberation Mono',monospace;font-size:15px;line-height:20px"><span style="color:#8a8a8a">09:40:28.415 </span><span style="color:#333">list start </span><span style="color:#1c2566;text-decoration:underline">at pages/tabbarPages/home/common/scroll.vue:58</span></div>
<svg class="a" style="left:814px;top:702px" width="16" height="15"><ellipse cx="8" cy="8.5" rx="4" ry="5" stroke="#e0958a" stroke-width="1.1" fill="none"/><path d="M8 4 V13.5 M6 2 L7 4 M10 2 L9 4 M4 6.5 L1.5 5.5 M12 6.5 L14.5 5.5 M4 9 H1.5 M12 9 H14.5 M4.3 11.5 L2 13 M11.7 11.5 L14 13" stroke="#e0958a" stroke-width="1" fill="none"/></svg>
<svg class="a" style="left:844px;top:703px" width="15" height="14"><path d="M3 3 A6 6 0 1 0 7.5 1" stroke="#9cb8a8" stroke-width="1.1" fill="none"/><path d="M1.5 1 L3 3.5 L5.5 2.5" stroke="#9cb8a8" stroke-width="1" fill="none"/><path d="M6 4.5 V10 L10.5 7.2 Z" fill="#9cb8a8"/></svg>
<div class="a" style="left:876px;top:703px;width:13px;height:13px;border:1px solid #c9958c;padding:1px"><div style="width:9px;height:9px;background:#c77a72"></div></div>
<svg class="a" style="left:905px;top:703px" width="15" height="14"><path d="M10 1.5 H0.5 V13.5 H13.5 V7" stroke="#6b6450" stroke-width="1" fill="none"/><path d="M2.5 5 L5 7 L2.5 9 M6 10.5 H9 M12 0 V5 M9.5 2.5 H14.5" stroke="#6b6450" stroke-width="1" fill="none"/></svg>
<svg class="a" style="left:935px;top:705px" width="15" height="9"><path d="M1 8 L7.5 1.5 L14 8" stroke="#6b6450" stroke-width="1.2" fill="none"/></svg>
<svg class="a" style="left:965px;top:703px" width="16" height="13"><path d="M1 1.5 L8 11.5 M8 1.5 L1 11.5" stroke="#6b6450" stroke-width="1.3" fill="none"/><path d="M12.5 1 V11.5 M9.5 8.5 L12.5 11.5 L15.5 8.5" stroke="#6b6450" stroke-width="1.2" fill="none"/></svg>
<div class="a" style="left:1px;top:878px;width:1374px;height:1px;background:#ddd3b0"></div>
<div class="a" style="left:1px;top:879px;width:1374px;height:24px;background:#fffcf0"></div>
<div class="a" style="left:0px;top:902px;width:1376px;height:1px;background:#d6cca6"></div>
<svg class="a" style="left:28px;top:884px" width="15" height="15"><circle cx="7.5" cy="7.5" r="6.5" stroke="#999" stroke-width="1" fill="#e8e4d8"/><circle cx="7.5" cy="6" r="2.5" fill="#999"/><path d="M3 12 Q7.5 7.5 12 12" fill="#999"/></svg>
<div class="t" style="left:49px;top:885px;font-size:12px;color:#3a9a5e">未登录</div>
<svg class="a" style="left:144px;top:885px" width="14" height="12"><path d="M0 1.5 H2 M0 5.5 H2 M0 9.5 H2 M4 1.5 H13 M4 5.5 H13 M4 9.5 H13" stroke="#6b6450" stroke-width="1.1"/></svg>
<svg class="a" style="left:169px;top:884px" width="15" height="13"><rect x="0.5" y="0.5" width="13" height="11" stroke="#6b6450" fill="none"/><path d="M3 4 L5 6 L3 8 M6.5 9 H9" stroke="#6b6450" fill="none"/></svg>
<div class="t" style="left:1120px;top:885px;font-size:12px;color:#6b6450">行:1 &nbsp;列:1</div>
<div class="t" style="left:1200px;top:885px;font-size:12px;color:#6b6450">UTF-8</div>
<div class="t" style="left:1260px;top:885px;font-size:12px;color:#6b6450">Vue</div>
<svg class="a" style="left:1305px;top:883px" width="20" height="16"><circle cx="8" cy="9" r="6.5" fill="#b5a47a"/><path d="M8 5.5 V11.5 M5.5 9 L8 11.5 L10.5 9" stroke="#fff" stroke-width="1.2" fill="none"/><circle cx="16" cy="4" r="2.6" fill="#e04a2a"/></svg>
<svg class="a" style="left:1336px;top:883px" width="14" height="15"><path d="M7 1.5 Q2.5 2 2.5 7 V10.5 L1 12 H13 L11.5 10.5 V7 Q11.5 2 7 1.5 Z" fill="#b5a47a"/><path d="M5.5 13.5 H8.5" stroke="#b5a47a" stroke-width="1.5"/></svg>
<!-- /CONSOLE -->
<!-- RIGHT -->
<div class="a" style="left:994px;top:60px;width:381px;height:818px;background:#fffdf4"></div>
<div class="a" style="left:994px;top:60px;width:381px;height:29px;background:#fcf7e6;border-bottom:1px solid #ddd3b0"></div>
<div class="a" style="left:994px;top:60px;width:110px;height:29px;background:#fffdf4;border-right:1px solid #ddd3b0"></div>
<div class="t" style="left:1005px;top:67px;font-size:13px;color:#333">Web浏览器</div>
<svg class="a" style="left:1078px;top:69px" width="11" height="11"><path d="M1 1 L10 10 M10 1 L1 10" stroke="#555" stroke-width="1"/></svg>
<div class="a" style="left:1000px;top:95px;width:369px;height:27px;border:1px solid #e3dfcc;background:#fffefa"></div>
<div class="t" style="left:1009px;top:101px;font-size:13px;letter-spacing:.2px;color:#333">http://localhost:8080/h5#/pages/tabbarPages/home/index</div>
<div class="a" style="left:1000px;top:127px;width:120px;height:27px;border:1px solid #4fa56a;background:#fffefa"></div>
<div class="t" style="left:1006px;top:133px;font-size:13px;color:#333">iPhone 6/7/8</div>
<svg class="a" style="left:1106px;top:138px" width="8" height="5"><path d="M0 0 H8 L4 5 Z" fill="#3f9f60"/></svg>
<svg class="a" style="left:1130px;top:132px" width="17" height="17"><rect x="3.5" y="3.5" width="11" height="10" stroke="#4fa56a" fill="none"/><path d="M1 6 V1 H6 M1 1 L5 5" stroke="#4fa56a" fill="none"/></svg>
<svg class="a" style="left:1160px;top:132px" width="17" height="17"><circle cx="8" cy="8" r="2.6" stroke="#4fa56a" stroke-width="1.1" fill="none"/><path d="M8 1.5 L9.3 3.3 L11.5 2.6 L11.7 4.8 L13.9 5.4 L12.9 7.4 L14.3 9.1 L12.3 10.1 L12.5 12.4 L10.3 12.3 L9.3 14.4 L8 12.6 L6.7 14.4 L5.7 12.3 L3.5 12.4 L3.7 10.1 L1.7 9.1 L3.1 7.4 L2.1 5.4 L4.3 4.8 L4.5 2.6 L6.7 3.3 Z" stroke="#4fa56a" stroke-width="1.1" fill="none"/></svg>
<svg class="a" style="left:1190px;top:132px" width="17" height="17"><rect x="0.5" y="2.5" width="15" height="12" stroke="#4fa56a" fill="none"/><path d="M3.5 6 L6 8.5 L3.5 11 M7.5 11.5 H11" stroke="#4fa56a" fill="none"/></svg>
<svg class="a" style="left:1221px;top:132px" width="17" height="17"><path d="M15 8.5 H2 M7 3.5 L2 8.5 L7 13.5" stroke="#4fa56a" stroke-width="1.8" fill="none"/></svg>
<svg class="a" style="left:1251px;top:132px" width="17" height="17"><path d="M1 8.5 H14 M9 3.5 L14 8.5 L9 13.5" stroke="#aaa" stroke-width="1.6" fill="none"/></svg>
<svg class="a" style="left:1281px;top:132px" width="17" height="17"><path d="M13 5 A6 6 0 1 0 14 9" stroke="#4fa56a" stroke-width="1.2" fill="none"/><path d="M10 4.5 H14 V1" stroke="#4fa56a" stroke-width="1.2" fill="none"/></svg>
<svg class="a" style="left:1311px;top:132px" width="17" height="17"><rect x="2.5" y="8" width="10" height="7" stroke="#4fa56a" stroke-width="1.2" fill="none"/><path d="M5 8 V5 A2.5 2.5 0 0 1 10 5" stroke="#4fa56a" stroke-width="1.2" fill="none"/></svg>
<svg class="a" style="left:1341px;top:132px" width="17" height="17"><rect x="1.5" y="1.5" width="5" height="5" stroke="#4fa56a" stroke-width="1.2" fill="none"/><rect x="9.5" y="1.5" width="5" height="5" stroke="#4fa56a" stroke-width="1.2" fill="none"/><rect x="1.5" y="9.5" width="5" height="5" stroke="#4fa56a" stroke-width="1.2" fill="none"/><path d="M9.5 10 H11 M13 10 H14.5 M9.5 14 H14.5 M12 12 V12.8" stroke="#4fa56a" stroke-width="1.2"/></svg>
<div class="a" style="left:994px;top:160px;width:381px;height:1px;background:#ddd3b0"></div>
<div class="a" style="left:994px;top:161px;width:381px;height:717px;background:linear-gradient(#fbfbfb,#f0f0f0 30px,#f0f0f0 680px,#f7f7f7)"></div>
<div class="a" style="left:997px;top:186px;width:375px;height:667px;background:#f0f0f0;box-shadow:0 0 8px rgba(0,0,0,.25);overflow:hidden">
<div class="a" style="left:0;top:0;width:375px;height:56px;background:#e45f33"></div>
<div class="a" style="left:16px;top:12px;width:30px;height:30px;background:#000"><svg class="a" style="left:4px;top:3px" width="22" height="22" viewBox="0 0 40 40"><path d="M20.5 3 h6 c0.5 4.5 3.5 7.5 8 8 v6 c-3 0 -5.8 -1 -8 -2.6 v11.6 c0 6 -4.8 10.5 -10.5 10.5 S5.5 32 5.5 26 c0 -5.8 4.7 -10.5 10.5 -10.5 c0.5 0 1 0 1.5 0.1 v6.2 c-0.5 -0.2 -1 -0.2 -1.5 -0.2 c-2.4 0 -4.3 2 -4.3 4.4 s1.9 4.4 4.3 4.4 s4.5 -2 4.5 -4.4 Z" fill="#25f4ee" transform="translate(-1.8,-1.8)"/><path d="M20.5 3 h6 c0.5 4.5 3.5 7.5 8 8 v6 c-3 0 -5.8 -1 -8 -2.6 v11.6 c0 6 -4.8 10.5 -10.5 10.5 S5.5 32 5.5 26 c0 -5.8 4.7 -10.5 10.5 -10.5 c0.5 0 1 0 1.5 0.1 v6.2 c-0.5 -0.2 -1 -0.2 -1.5 -0.2 c-2.4 0 -4.3 2 -4.3 4.4 s1.9 4.4 4.3 4.4 s4.5 -2 4.5 -4.4 Z" fill="#fe2c55" transform="translate(1.8,1.8)"/><path d="M20.5 3 h6 c0.5 4.5 3.5 7.5 8 8 v6 c-3 0 -5.8 -1 -8 -2.6 v11.6 c0 6 -4.8 10.5 -10.5 10.5 S5.5 32 5.5 26 c0 -5.8 4.7 -10.5 10.5 -10.5 c0.5 0 1 0 1.5 0.1 v6.2 c-0.5 -0.2 -1 -0.2 -1.5 -0.2 c-2.4 0 -4.3 2 -4.3 4.4 s1.9 4.4 4.3 4.4 s4.5 -2 4.5 -4.4 Z" fill="#fff"/></svg></div>
<div class="t" style="left:0;width:375px;text-align:center;top:20px;font-size:16px;font-weight:bold;color:#fff">欢迎</div>
<svg class="a" style="left:333px;top:16px" width="24" height="22" viewBox="0 0 24 22"><circle cx="12" cy="11" r="10.2" stroke="#fff" stroke-width="1.5" fill="none" opacity=".85"/><ellipse cx="12" cy="11" rx="4.5" ry="10.2" stroke="#fff" stroke-width="1.3" fill="none" opacity=".85"/><path d="M2 11 H22 M3.5 6 H20.5 M3.5 16 H20.5 M12 1 V21" stroke="#fff" stroke-width="1.2" opacity=".85"/></svg>
<svg class="a" style="left:17px;top:74px" width="252" height="152"><rect x="0" y="0" width="252" height="152" rx="13" fill="#f2e4fa"/><clipPath id="bc"><rect x="0" y="0" width="252" height="152" rx="13"/></clipPath><g clip-path="url(#bc)"><circle cx="10" cy="83" r="64" fill="#e8ebfb"/><rect x="0" y="9" width="18" height="5.5" fill="#6e8ae6"/><rect x="0" y="14.5" width="18" height="23.5" fill="#fff"/><circle cx="6" cy="24" r="5" fill="#dde2f6"/><circle cx="50" cy="32" r="9.5" fill="#d3daf7"/><path d="M45 28 H49 L50.5 29.5 H55 V36 H45 Z" fill="#5b7be0"/><circle cx="42" cy="24" r="4" fill="#3ccfc4"/><path d="M40.3 24 L41.6 25.3 L43.8 23" stroke="#fff" stroke-width="0.9" fill="none"/><rect x="12" y="45" width="21" height="5" fill="none" stroke="#cfd4e6" stroke-width="0.8"/><path d="M14.5 49.8 H52 Q53 49.8 53 51 V74.5 L50 71.5 H14.5 Q13.4 71.5 13.4 70.3 V51 Q13.4 49.8 14.5 49.8 Z" fill="#0c0c0c"/><text x="17" y="60.5" font-family="Liberation Sans" font-size="8" font-weight="bold" fill="#fff" textLength="31">TikTok:</text><text x="18" y="68" font-family="Liberation Sans" font-size="4.6" font-weight="bold" fill="#eee" textLength="27">For Business</text><path d="M57 62.7 H75 V72.8 H60.5 L57 76 Z" fill="#e3395a"/><path d="M60 66 H72 M62 69.5 H70" stroke="#fff" stroke-width="0.9" opacity=".8"/><path d="M0 55 Q4 56 4 61 Q4 66 0 66 Z" fill="#111"/><path d="M0 83 Q14 84 22 96 L30 106 L38 101 L43 108 Q34 116 24 114 L0 116 Z" fill="#6d84e2"/><path d="M4 92 Q9 94 8 100 M14 98 Q17 104 12 108 M2 104 Q6 106 4 110" stroke="#a9b8f0" stroke-width="1.6" fill="none"/><path d="M36 101 Q38 92 44 89 L52 82 Q54 78 56 81 L54 88 Q59 90 58 96 Q56 103 48 104 L40 107 Z" fill="#f5c3a0"/><path d="M0 111 H37 L40 137 H0 Z" fill="#6d86e8"/><circle cx="18" cy="124" r="2.8" fill="#fff"/><path d="M46 118 H60 L58.5 137 H47.5 Z" fill="#7f97ee"/><rect x="45.5" y="116" width="15" height="3" fill="#5a74d8"/><rect x="47" y="126" width="12.3" height="3" fill="#5a74d8"/><path d="M0 137.5 H82" stroke="#5a5a66" stroke-width="1.3"/></g><g transform="translate(94,5) scale(1.68)"><path d="M20.5 3 h6 c0.5 4.5 3.5 7.5 8 8 v6 c-3 0 -5.8 -1 -8 -2.6 v11.6 c0 6 -4.8 10.5 -10.5 10.5 S5.5 32 5.5 26 c0 -5.8 4.7 -10.5 10.5 -10.5 c0.5 0 1 0 1.5 0.1 v6.2 c-0.5 -0.2 -1 -0.2 -1.5 -0.2 c-2.4 0 -4.3 2 -4.3 4.4 s1.9 4.4 4.3 4.4 s4.5 -2 4.5 -4.4 Z" fill="#25f4ee" transform="translate(-1.1,-1.1)"/><path d="M20.5 3 h6 c0.5 4.5 3.5 7.5 8 8 v6 c-3 0 -5.8 -1 -8 -2.6 v11.6 c0 6 -4.8 10.5 -10.5 10.5 S5.5 32 5.5 26 c0 -5.8 4.7 -10.5 10.5 -10.5 c0.5 0 1 0 1.5 0.1 v6.2 c-0.5 -0.2 -1 -0.2 -1.5 -0.2 c-2.4 0 -4.3 2 -4.3 4.4 s1.9 4.4 4.3 4.4 s4.5 -2 4.5 -4.4 Z" fill="#fe2c55" transform="translate(1.1,1.1)"/><path d="M20.5 3 h6 c0.5 4.5 3.5 7.5 8 8 v6 c-3 0 -5.8 -1 -8 -2.6 v11.6 c0 6 -4.8 10.5 -10.5 10.5 S5.5 32 5.5 26 c0 -5.8 4.7 -10.5 10.5 -10.5 c0.5 0 1 0 1.5 0.1 v6.2 c-0.5 -0.2 -1 -0.2 -1.5 -0.2 c-2.4 0 -4.3 2 -4.3 4.4 s1.9 4.4 4.3 4.4 s4.5 -2 4.5 -4.4 Z" fill="#000"/></g><text x="93" y="98" font-family="Liberation Sans" font-size="19" font-weight="bold" fill="#111" textLength="64">Tik Tok</text><text x="90" y="126" font-family="Liberation Sans" font-size="25" font-weight="bold" fill="#111" textLength="68">SHOP</text><path d="M180 84 L186 86 L190 118 H225 L228 94 H188 M192 102 H226 M194 110 H225 M199 94 V118 M209 94 V118 M218 94 V118" stroke="#111" stroke-width="2.4" fill="none" stroke-linejoin="round"/><circle cx="191" cy="124" r="4.5" fill="#1fb6e8"/><circle cx="220" cy="124" r="4.5" fill="#e8174a"/><circle cx="157" cy="141" r="3.5" fill="#b8aec4"/><circle cx="170" cy="141" r="3.5" fill="#ece4f2"/><circle cx="183" cy="141" r="3.5" fill="#b8aec4"/></svg>
<svg class="a" style="left:271px;top:74px" width="88" height="152"><defs><linearGradient id="sky" x1="0" y1="0" x2="0" y2="1"><stop offset="0" stop-color="#5a98d6"/><stop offset="0.5" stop-color="#8cb8e2"/><stop offset="1" stop-color="#b8d2ea"/></linearGradient><clipPath id="pc"><rect x="0" y="0" width="88" height="152" rx="13"/></clipPath></defs><g clip-path="url(#pc)"><rect width="88" height="152" fill="url(#sky)"/><path d="M0 40 Q30 55 60 30 M10 20 Q40 30 80 10 M0 75 Q25 70 45 60" stroke="#d6e6f5" stroke-width="3" fill="none" opacity=".18"/><path d="M40 62 Q48 42 60 52 Q70 33 86 35 L88 36 V60 Z" fill="#4d80c8"/><path d="M0 104 Q40 80 88 48 V120 L0 112 Z" fill="#b8603e"/><path d="M0 98 Q40 75 88 42 V50 Q40 82 0 104 Z" fill="#c9a0b0"/><path d="M58 100 L75 94 L66 110 Z" fill="#9a86d8"/><path d="M72 65 L88 60 L80 75 Z" fill="#c8c0d8" opacity=".8"/><circle cx="22" cy="102" r="9" fill="#7a9a58" opacity=".55"/><circle cx="34" cy="108" r="7" fill="#6a8a50" opacity=".5"/><circle cx="42" cy="90" r="1.2" fill="#ffe9b0"/><circle cx="51" cy="87" r="1.2" fill="#ffe9b0"/><path d="M0 108 L88 116 V128 L0 120 Z" fill="#4b7d9e"/><path d="M0 120 L88 128 V152 H0 Z" fill="#3a3a3e"/><path d="M12 130 H58 M68 136 H88 M0 142 H30" stroke="#f0d890" stroke-width="1.6"/><path d="M36 126 V152" stroke="#5a5045" stroke-width="3"/><path d="M0 138 L88 142" stroke="#5b7a95" stroke-width="3" opacity=".7"/></g></svg>
<div class="a" style="left:17px;top:249px;width:158px;height:68px;background:#fff;border-radius:12px"></div>
<svg class="a" style="left:34px;top:266px" width="34" height="34"><circle cx="17" cy="17" r="17" fill="#8b90f2"/><path d="M7 17 Q7 9 16 9 Q22 9 25 12 L28 11 L27 15 Q29 17 28 20 L25 21 L23 26 H20 L19 24 H14 L13 26 H10 L9 22 Q7 20 7 17 Z" fill="#fff"/></svg>
<div class="t" style="left:80px;top:278px;font-size:12px;color:#7f88cf">立即存款</div>
<div class="a" style="left:200px;top:249px;width:158px;height:68px;background:#fff;border-radius:12px"></div>
<svg class="a" style="left:217px;top:266px" width="34" height="34"><circle cx="17" cy="17" r="17" fill="#f6982e"/><path d="M13 8 L15 10 L17 7 L19 10 L21 8 L20 12 H14 Z M14 13 H20 Q27 18 26 24 Q25 28 17 28 Q9 28 8 24 Q7 18 14 13 Z" fill="#fff"/></svg>
<div class="t" style="left:263px;top:278px;font-size:12px;color:#e39a56">快速取款</div>
<div class="a" style="left:17px;top:329px;width:158px;height:68px;background:#fff;border-radius:12px"></div>
<svg class="a" style="left:34px;top:346px" width="34" height="34"><circle cx="17" cy="17" r="17" fill="#3cba78"/><ellipse cx="9" cy="6" rx="12" ry="8" fill="#fff" opacity=".95"/><circle cx="20" cy="16" r="5" fill="#fff"/><circle cx="13" cy="22" r="4" fill="#fff" opacity=".9"/></svg>
<div class="t" style="left:80px;top:358px;font-size:12px;color:#3aa070">邀请好友</div>
<div class="a" style="left:200px;top:329px;width:158px;height:68px;background:#fff;border-radius:12px"></div>
<svg class="a" style="left:217px;top:346px" width="34" height="34"><path d="M4 19 Q3 3 17 2.5 Q31 3 30 19 L27 17 Q24 12 17 11 Q10 12 7 17 Z" fill="#e8603a"/><path d="M6 12 Q17 1 28 12" stroke="#fff" stroke-width="1.2" fill="none"/><path d="M6 17 Q5 30 17 31 Q29 30 28 17" stroke="#e8603a" stroke-width="2.2" fill="none"/><ellipse cx="3.5" cy="21" rx="3.3" ry="5" fill="#e8603a"/><ellipse cx="30.5" cy="21" rx="3.3" ry="5" fill="#e8603a"/><path d="M12.5 24.5 Q17 27 21.5 24.5" stroke="#e8603a" stroke-width="1" fill="none"/><path d="M30 26 Q27 32 13 32.5" stroke="#e8603a" stroke-width="1.4" fill="none"/><circle cx="12" cy="32.5" r="2.2" fill="#e8603a"/></svg>
<div class="t" style="left:263px;top:358px;font-size:12px;color:#d4683a">客户服务</div>
<div class="a" style="left:0px;top:339px;width:128px;height:22px;background:rgba(255,255,255,.75);filter:blur(2px)"></div>
<div class="a" style="left:33px;top:341px;width:30px;height:14px;background:rgba(255,255,255,.9);filter:blur(2px);border-radius:6px"></div>
<div class="a" style="left:78px;top:352px;width:52px;height:9px;background:rgba(255,255,255,.7);filter:blur(1.5px)"></div>
<div class="a" style="left:18px;top:414px;width:340px;height:280px;border-radius:10px;border:2px solid #fff;background:linear-gradient(180deg,#dbe2f8,#e6eafa 60%,#eef0fb);overflow:hidden"><svg class="a" style="left:0;top:0" width="338" height="280"><polygon points="214,0 338,0 338,66 238,116" fill="#fff" opacity=".35"/></svg></div>
<div class="t" style="left:31px;top:426px;font-size:18px;color:#111;">123123</div>
<div class="a" style="left:219px;top:427px;width:1px;height:17px;background:#999"></div>
<div class="t" style="left:239px;top:426px;font-size:18px;color:#111;">ID: 361991</div>
<div class="t" style="left:31px;top:459px;font-size:16px;color:#111;">账户余额</div>
<div class="t" style="left:30px;top:495px;font-size:28px;color:#111;font-weight:bold;letter-spacing:1.3px">$ 4063.85</div>
<div class="t" style="left:31px;top:537px;font-size:14px;color:#111;">今日订单</div>
<div class="t" style="left:31px;top:556px;font-size:15px;color:#111;">2</div>
<div class="t" style="left:188px;top:537px;font-size:14px;color:#111;">今日张幅</div>
<div class="t" style="left:188px;top:556px;font-size:15px;color:#111;">$ 63.85</div>
<div class="t" style="left:31px;top:583px;font-size:14px;color:#111;">所有订单</div>
<div class="t" style="left:31px;top:602px;font-size:15px;color:#111;">2</div>
<div class="t" style="left:188px;top:583px;font-size:14px;color:#111;">总佣金</div>
<div class="t" style="left:188px;top:602px;font-size:15px;color:#111;">$ 12.5</div>
<div class="a" style="left:0px;top:617px;width:375px;height:50px;background:#fff;box-shadow:0 2px 6px rgba(0,0,0,.12)"></div>
<div class="a" style="left:147px;top:580px;width:81px;height:81px;border-radius:50%;background:#fff"></div>
<div class="a" style="left:157px;top:590px;width:62px;height:62px;border-radius:50%;background:#000"><svg class="a" style="left:7px;top:6px" width="48" height="48" viewBox="0 0 40 40"><path d="M20.5 3 h6 c0.5 4.5 3.5 7.5 8 8 v6 c-3 0 -5.8 -1 -8 -2.6 v11.6 c0 6 -4.8 10.5 -10.5 10.5 S5.5 32 5.5 26 c0 -5.8 4.7 -10.5 10.5 -10.5 c0.5 0 1 0 1.5 0.1 v6.2 c-0.5 -0.2 -1 -0.2 -1.5 -0.2 c-2.4 0 -4.3 2 -4.3 4.4 s1.9 4.4 4.3 4.4 s4.5 -2 4.5 -4.4 Z" fill="#25f4ee" transform="translate(-1.5,-1.5)"/><path d="M20.5 3 h6 c0.5 4.5 3.5 7.5 8 8 v6 c-3 0 -5.8 -1 -8 -2.6 v11.6 c0 6 -4.8 10.5 -10.5 10.5 S5.5 32 5.5 26 c0 -5.8 4.7 -10.5 10.5 -10.5 c0.5 0 1 0 1.5 0.1 v6.2 c-0.5 -0.2 -1 -0.2 -1.5 -0.2 c-2.4 0 -4.3 2 -4.3 4.4 s1.9 4.4 4.3 4.4 s4.5 -2 4.5 -4.4 Z" fill="#fe2c55" transform="translate(1.5,1.5)"/><path d="M20.5 3 h6 c0.5 4.5 3.5 7.5 8 8 v6 c-3 0 -5.8 -1 -8 -2.6 v11.6 c0 6 -4.8 10.5 -10.5 10.5 S5.5 32 5.5 26 c0 -5.8 4.7 -10.5 10.5 -10.5 c0.5 0 1 0 1.5 0.1 v6.2 c-0.5 -0.2 -1 -0.2 -1.5 -0.2 c-2.4 0 -4.3 2 -4.3 4.4 s1.9 4.4 4.3 4.4 s4.5 -2 4.5 -4.4 Z" fill="#fff"/></svg></div>
<div class="t" style="left:26px;top:652px;font-size:12px;color:#f3a95e">首页</div>
<div class="t" style="left:101px;top:652px;font-size:12px;color:#666">仓库</div>
<div class="t" style="left:250px;top:652px;font-size:12px;color:#666">客户</div>
<div class="t" style="left:326px;top:652px;font-size:12px;color:#666">我的</div>
<svg class="a" style="left:27px;top:625px" width="24" height="20"><path d="M1 1 L4 2 L6 12 H19 L21 5 H5" stroke="#f5b06a" stroke-width="1.5" fill="none" stroke-linejoin="round"/><path d="M6 14 H19" stroke="#f5b06a" stroke-width="1.3"/><circle cx="8" cy="17.5" r="1.5" fill="#f5b06a"/><circle cx="17" cy="17.5" r="1.5" fill="#f5b06a"/></svg>
<svg class="a" style="left:104px;top:624px" width="18" height="20"><rect x="1" y="1" width="15" height="18" rx="3" stroke="#999" stroke-width="1.5" fill="none"/><path d="M5 6 H12 M5 10 H12 M5 14 H10" stroke="#999" stroke-width="1.3"/></svg>
<svg class="a" style="left:254px;top:624px" width="20" height="20"><path d="M3 12 V9 A7 7 0 0 1 17 9 V12" stroke="#999" stroke-width="1.6" fill="none"/><rect x="1" y="10" width="3.5" height="6" rx="1" fill="#999"/><rect x="15.5" y="10" width="3.5" height="6" rx="1" fill="#999"/></svg>
<svg class="a" style="left:328px;top:624px" width="22" height="20"><circle cx="12" cy="6" r="4.5" stroke="#999" stroke-width="1.5" fill="none"/><path d="M4.5 18 Q5.5 11 12 11 Q18.5 11 19.5 18" stroke="#999" stroke-width="1.5" fill="none"/><path d="M8.5 2.5 Q4 3.5 5.5 9 M4.5 11.5 Q1 13 1 17" stroke="#999" stroke-width="1.3" fill="none"/></svg>
</div>
<!-- /RIGHT -->
<!-- SMEAR -->
<div class="a" style="left:102px;top:264px;width:110px;height:27px;background:#f2ebd6;filter:blur(2px);border-radius:8px"></div>
<div class="a" style="left:104px;top:262px;width:100px;height:4px;background:#fffdf6;filter:blur(1.5px)"></div>
<div class="a" style="left:219px;top:262px;width:82px;height:24px;background:#fefcf5;filter:blur(2.5px)"></div>
<div class="a" style="left:290px;top:265px;width:110px;height:20px;background:rgba(254,252,245,.8);filter:blur(2.5px)"></div>
<svg class="a" style="left:114px;top:264px" width="7" height="10"><path d="M1 1 L5 5 L1 9" stroke="#666" stroke-width="1.2" fill="none"/></svg><div class="tr" style="left:134px;top:259px;color:#333">c</div>
<div class="a" style="left:958px;top:523px;width:39px;height:24px;background:rgba(255,254,250,.85);filter:blur(2px)"></div>
<!-- /SMEAR -->
<!-- WM -->
<div class="wm" style="left:877.4px;top:-135.6px"><i>m</i><i>y</i><i>c</i><i>h</i><i>e</i><i>n</i><i>g</i><i>.</i><i style="width:4px">&nbsp;</i><i>t</i><i>o</i><i>p</i></div>
<div class="wm" style="left:1227.4px;top:-68.6px"><i>m</i><i>y</i><i>c</i><i>h</i><i>e</i><i>n</i><i>g</i><i>.</i><i style="width:4px">&nbsp;</i><i>t</i><i>o</i><i>p</i></div>
<div class="wm" style="left:36.2px;top:-128.3px"><i>m</i><i>y</i><i>c</i><i>h</i><i>e</i><i>n</i><i>g</i><i>.</i><i style="width:4px">&nbsp;</i><i>t</i><i>o</i><i>p</i></div>
<div class="wm" style="left:386.2px;top:-61.3px"><i>m</i><i>y</i><i>c</i><i>h</i><i>e</i><i>n</i><i>g</i><i>.</i><i style="width:4px">&nbsp;</i><i>t</i><i>o</i><i>p</i></div>
<div class="wm" style="left:736.2px;top:5.7px"><i>m</i><i>y</i><i>c</i><i>h</i><i>e</i><i>n</i><i>g</i><i>.</i><i style="width:4px">&nbsp;</i><i>t</i><i>o</i><i>p</i></div>
<div class="wm" style="left:1086.2px;top:72.7px"><i>m</i><i>y</i><i>c</i><i>h</i><i>e</i><i>n</i><i>g</i><i>.</i><i style="width:4px">&nbsp;</i><i>t</i><i>o</i><i>p</i></div>
<div class="wm" style="left:-105.0px;top:13.0px"><i>m</i><i>y</i><i>c</i><i>h</i><i>e</i><i>n</i><i>g</i><i>.</i><i style="width:4px">&nbsp;</i><i>t</i><i>o</i><i>p</i></div>
<div class="wm" style="left:245.0px;top:80.0px"><i>m</i><i>y</i><i>c</i><i>h</i><i>e</i><i>n</i><i>g</i><i>.</i><i style="width:4px">&nbsp;</i><i>t</i><i>o</i><i>p</i></div>
<div class="wm" style="left:595.0px;top:147.0px"><i>m</i><i>y</i><i>c</i><i>h</i><i>e</i><i>n</i><i>g</i><i>.</i><i style="width:4px">&nbsp;</i><i>t</i><i>o</i><i>p</i></div>
<div class="wm" style="left:945.0px;top:214.0px"><i>m</i><i>y</i><i>c</i><i>h</i><i>e</i><i>n</i><i>g</i><i>.</i><i style="width:4px">&nbsp;</i><i>t</i><i>o</i><i>p</i></div>
<div class="wm" style="left:1295.0px;top:281.0px"><i>m</i><i>y</i><i>c</i><i>h</i><i>e</i><i>n</i><i>g</i><i>.</i><i style="width:4px">&nbsp;</i><i>t</i><i>o</i><i>p</i></div>
<div class="wm" style="left:103.8px;top:221.3px"><i>m</i><i>y</i><i>c</i><i>h</i><i>e</i><i>n</i><i>g</i><i>.</i><i style="width:4px">&nbsp;</i><i>t</i><i>o</i><i>p</i></div>
<div class="wm" style="left:453.8px;top:288.3px"><i>m</i><i>y</i><i>c</i><i>h</i><i>e</i><i>n</i><i>g</i><i>.</i><i style="width:4px">&nbsp;</i><i>t</i><i>o</i><i>p</i></div>
<div class="wm" style="left:803.8px;top:355.3px"><i>m</i><i>y</i><i>c</i><i>h</i><i>e</i><i>n</i><i>g</i><i>.</i><i style="width:4px">&nbsp;</i><i>t</i><i>o</i><i>p</i></div>
<div class="wm" style="left:1153.8px;top:422.3px"><i>m</i><i>y</i><i>c</i><i>h</i><i>e</i><i>n</i><i>g</i><i>.</i><i style="width:4px">&nbsp;</i><i>t</i><i>o</i><i>p</i></div>
<div class="wm" style="left:-37.4px;top:362.6px"><i>m</i><i>y</i><i>c</i><i>h</i><i>e</i><i>n</i><i>g</i><i>.</i><i style="width:4px">&nbsp;</i><i>t</i><i>o</i><i>p</i></div>
<div class="wm" style="left:312.6px;top:429.6px"><i>m</i><i>y</i><i>c</i><i>h</i><i>e</i><i>n</i><i>g</i><i>.</i><i style="width:4px">&nbsp;</i><i>t</i><i>o</i><i>p</i></div>
<div class="wm" style="left:662.6px;top:496.6px"><i>m</i><i>y</i><i>c</i><i>h</i><i>e</i><i>n</i><i>g</i><i>.</i><i style="width:4px">&nbsp;</i><i>t</i><i>o</i><i>p</i></div>
<div class="wm" style="left:1012.6px;top:563.6px"><i>m</i><i>y</i><i>c</i><i>h</i><i>e</i><i>n</i><i>g</i><i>.</i><i style="width:4px">&nbsp;</i><i>t</i><i>o</i><i>p</i></div>
<div class="wm" style="left:1362.6px;top:630.6px"><i>m</i><i>y</i><i>c</i><i>h</i><i>e</i><i>n</i><i>g</i><i>.</i><i style="width:4px">&nbsp;</i><i>t</i><i>o</i><i>p</i></div>
<div class="wm" style="left:-178.6px;top:503.9px"><i>m</i><i>y</i><i>c</i><i>h</i><i>e</i><i>n</i><i>g</i><i>.</i><i style="width:4px">&nbsp;</i><i>t</i><i>o</i><i>p</i></div>
<div class="wm" style="left:171.4px;top:570.9px"><i>m</i><i>y</i><i>c</i><i>h</i><i>e</i><i>n</i><i>g</i><i>.</i><i style="width:4px">&nbsp;</i><i>t</i><i>o</i><i>p</i></div>
<div class="wm" style="left:521.4px;top:637.9px"><i>m</i><i>y</i><i>c</i><i>h</i><i>e</i><i>n</i><i>g</i><i>.</i><i style="width:4px">&nbsp;</i><i>t</i><i>o</i><i>p</i></div>
<div class="wm" style="left:871.4px;top:704.9px"><i>m</i><i>y</i><i>c</i><i>h</i><i>e</i><i>n</i><i>g</i><i>.</i><i style="width:4px">&nbsp;</i><i>t</i><i>o</i><i>p</i></div>
<div class="wm" style="left:1221.4px;top:771.9px"><i>m</i><i>y</i><i>c</i><i>h</i><i>e</i><i>n</i><i>g</i><i>.</i><i style="width:4px">&nbsp;</i><i>t</i><i>o</i><i>p</i></div>
<div class="wm" style="left:30.2px;top:712.2px"><i>m</i><i>y</i><i>c</i><i>h</i><i>e</i><i>n</i><i>g</i><i>.</i><i style="width:4px">&nbsp;</i><i>t</i><i>o</i><i>p</i></div>
<div class="wm" style="left:380.2px;top:779.2px"><i>m</i><i>y</i><i>c</i><i>h</i><i>e</i><i>n</i><i>g</i><i>.</i><i style="width:4px">&nbsp;</i><i>t</i><i>o</i><i>p</i></div>
<div class="wm" style="left:730.2px;top:846.2px"><i>m</i><i>y</i><i>c</i><i>h</i><i>e</i><i>n</i><i>g</i><i>.</i><i style="width:4px">&nbsp;</i><i>t</i><i>o</i><i>p</i></div>
<div class="wm" style="left:-111.0px;top:853.5px"><i>m</i><i>y</i><i>c</i><i>h</i><i>e</i><i>n</i><i>g</i><i>.</i><i style="width:4px">&nbsp;</i><i>t</i><i>o</i><i>p</i></div>
<!-- /WM -->
</body></html>
